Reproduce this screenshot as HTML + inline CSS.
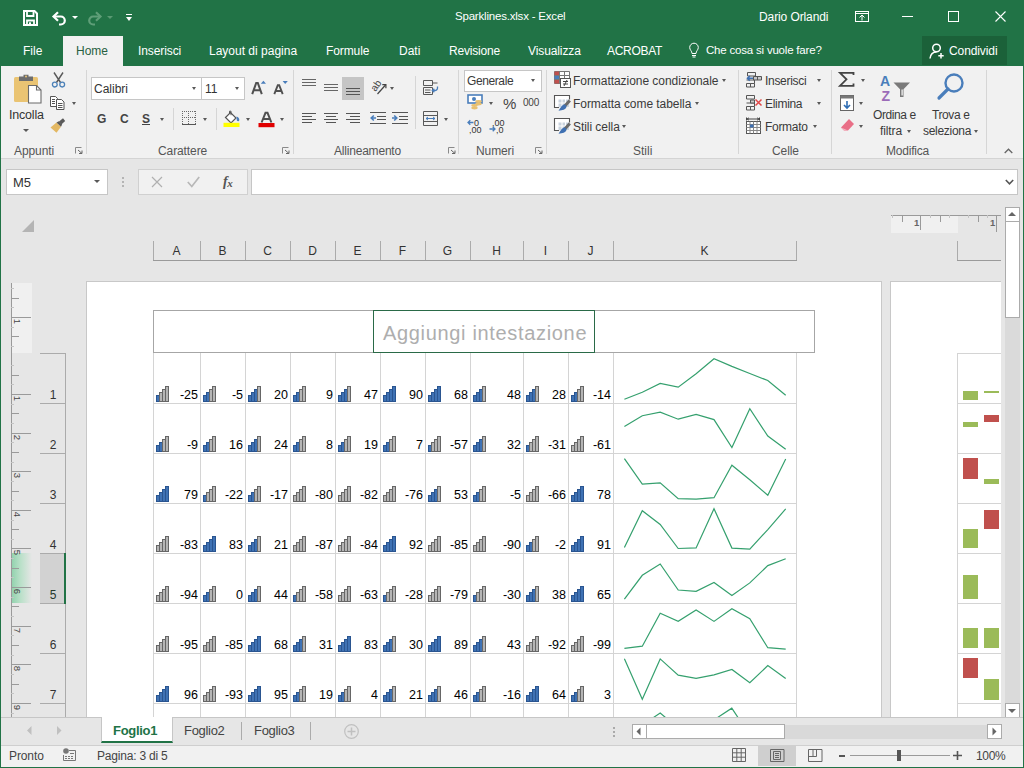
<!DOCTYPE html>
<html><head><meta charset="utf-8">
<style>
*{margin:0;padding:0;box-sizing:border-box}
html,body{width:1024px;height:768px;overflow:hidden;background:#e6e6e6;font-family:"Liberation Sans",sans-serif;}
.a{position:absolute}
.t{position:absolute;white-space:nowrap;line-height:1}
svg{position:absolute;overflow:visible}
#title{left:0;top:0;width:1024px;height:36px;background:#217346}
#tabs{left:0;top:36px;width:1024px;height:30px;background:#217346}
#ribbon{left:0;top:66px;width:1024px;height:93px;background:#f1f1f1;border-bottom:1px solid #d4d4d4}
.wt{color:#fff;font-size:12px}
.rt{color:#3a3a3a;font-size:12px}
.gl{color:#555;font-size:12px}
.sep{position:absolute;width:1px;background:#d6d6d6}
.num{font-size:12.5px;color:#000}
.arr{position:absolute;width:0;height:0;border-left:2.5px solid transparent;border-right:2.5px solid transparent;border-top:3px solid #595959}
</style></head><body>
<div class="a" id="title"></div>
<div class="a" id="tabs"></div>
<div class="a" id="ribbon"></div>

<!-- TITLE BAR -->
<svg style="left:23px;top:10px" width="15" height="16" viewBox="0 0 15 16"><path d="M1 1h10.5L14 3.5V15H1z" fill="none" stroke="#fff" stroke-width="2"/><path d="M4 1.5v4.5h6.5V1.5" fill="none" stroke="#fff" stroke-width="1.8"/><path d="M4 15v-4.5h7V15" fill="none" stroke="#fff" stroke-width="1.8"/><rect x="6" y="12.3" width="2" height="2.7" fill="#fff"/></svg>
<svg style="left:52px;top:11px" width="15" height="14" viewBox="0 0 15 14"><path d="M2 5.5h6.8a4 4 0 0 1 0 8H7" fill="none" stroke="#fff" stroke-width="2.2"/><path d="M6 1.2L1.5 5.5 6 9.8" fill="none" stroke="#fff" stroke-width="2.2"/></svg>
<div class="arr" style="left:72px;top:16px;border-top-color:#fff;border-left-width:3px;border-right-width:3px;border-top-width:3px"></div>
<svg style="left:87px;top:11px" width="15" height="14" viewBox="0 0 15 14"><path d="M13 5.5H6.2a4 4 0 0 0 0 8H8" fill="none" stroke="#5f9e78" stroke-width="2.2"/><path d="M9 1.2l4.5 4.3L9 9.8" fill="none" stroke="#5f9e78" stroke-width="2.2"/></svg>
<div class="arr" style="left:107px;top:16px;border-top-color:#5a9a73;border-left-width:3px;border-right-width:3px;border-top-width:3px"></div>
<div class="a" style="left:126px;top:14px;width:6px;height:1.3px;background:#fff"></div>
<div class="arr" style="left:125.5px;top:17px;border-top-color:#fff;border-left-width:3.5px;border-right-width:3.5px;border-top-width:4px"></div>
<div class="t wt" style="left:455px;top:11px;font-size:11.5px;letter-spacing:-0.2px">Sparklines.xlsx - Excel</div>
<div class="t wt" style="left:759px;top:11px;font-size:12px;letter-spacing:-0.1px">Dario Orlandi</div>
<svg style="left:855px;top:11px" width="14" height="11" viewBox="0 0 14 11"><rect x="0.5" y="0.5" width="13" height="10" fill="none" stroke="#fff" stroke-width="1"/><path d="M0.5 2.5h13" stroke="#fff" stroke-width="1"/><path d="M7 9.5V4.5M4.5 6.5L7 4l2.5 2.5" fill="none" stroke="#fff" stroke-width="1"/></svg>
<div class="a" style="left:902px;top:16px;width:11px;height:1px;background:#fff"></div>
<div class="a" style="left:948px;top:11px;width:11px;height:11px;border:1px solid #fff"></div>
<svg style="left:995px;top:11px" width="11" height="11" viewBox="0 0 11 11"><path d="M0.5 0.5l10 10M10.5 0.5l-10 10" stroke="#fff" stroke-width="1.1"/></svg>
<!-- TABS -->
<div class="t wt" style="left:23px;top:45px">File</div>
<div class="a" style="left:63px;top:36px;width:60px;height:31px;background:#f1f1f1"></div>
<div class="t" style="left:76px;top:45px;font-size:12px;color:#285f41">Home</div>
<div class="t wt" style="left:138px;top:45px;letter-spacing:-0.1px">Inserisci</div>
<div class="t wt" style="left:209px;top:45px">Layout di pagina</div>
<div class="t wt" style="left:326px;top:45px;letter-spacing:-0.1px">Formule</div>
<div class="t wt" style="left:399px;top:45px">Dati</div>
<div class="t wt" style="left:449px;top:45px;letter-spacing:-0.2px">Revisione</div>
<div class="t wt" style="left:528px;top:45px;letter-spacing:-0.1px">Visualizza</div>
<div class="t wt" style="left:607px;top:45px;letter-spacing:-0.3px">ACROBAT</div>
<svg style="left:689px;top:43px" width="10" height="15" viewBox="0 0 10 15"><path d="M3 10.5C3 8 0.7 7 0.7 4.5a4.3 4.3 0 0 1 8.6 0C9.3 7 7 8 7 10.5z" fill="none" stroke="#fff" stroke-width="1"/><path d="M3 12.5h4M3.5 14h3" stroke="#fff" stroke-width="1"/></svg>
<div class="t wt" style="left:706px;top:45px;font-size:11.5px;letter-spacing:-0.2px">Che cosa si vuole fare?</div>
<div class="a" style="left:922px;top:36px;width:85px;height:29px;background:#1b6139"></div>
<svg style="left:929px;top:43px" width="16" height="16" viewBox="0 0 16 16"><circle cx="7.5" cy="5" r="3.8" fill="none" stroke="#fff" stroke-width="1.5"/><path d="M1 15.5c0.5-4 3-6.5 6.5-6.5" fill="none" stroke="#fff" stroke-width="1.5"/><path d="M12 10v5.5M9.3 12.8h5.4" stroke="#fff" stroke-width="1.5"/></svg>
<div class="t wt" style="left:949px;top:45px;letter-spacing:-0.1px">Condividi</div>

<!-- RIBBON: Appunti -->
<svg style="left:14px;top:74px" width="30" height="30" viewBox="0 0 30 30"><rect x="0" y="3" width="24" height="25" rx="1.5" fill="#eac473"/><path d="M5 2.5h4.5V0.8h5v1.7H19V7H5z" fill="#6d6d6d"/><circle cx="12" cy="2.6" r="1" fill="#eac473"/><path d="M14.5 11.5h8l4.5 4.5v13H14.5z" fill="#fff" stroke="#6b6b6b" stroke-width="1.1"/><path d="M22.5 11.5v4.5H27" fill="none" stroke="#6b6b6b" stroke-width="1.1"/></svg>
<div class="t rt" style="left:9px;top:109px;font-size:12.5px;letter-spacing:-0.2px;color:#333">Incolla</div>
<div class="arr" style="left:23px;top:129px;border-left-width:3px;border-right-width:3px;border-top-width:3px"></div>
<svg style="left:51px;top:72px" width="15" height="16" viewBox="0 0 15 16"><path d="M3 0.5l6.5 10M12 0.5L5.5 10.5" stroke="#595959" stroke-width="1.4"/><circle cx="3.8" cy="12.6" r="2.4" fill="none" stroke="#4d82b8" stroke-width="1.3"/><circle cx="11.2" cy="12.6" r="2.4" fill="none" stroke="#4d82b8" stroke-width="1.3"/></svg>
<svg style="left:50px;top:96px" width="15" height="14" viewBox="0 0 15 14"><path d="M0.5 0.5h5l2 2v8h-7z" fill="#fff" stroke="#555" stroke-width="1"/><path d="M2 3.5h3M2 5.5h3M2 7.5h3" stroke="#555" stroke-width="1"/><path d="M6.5 3.5h5l2.5 2.5v7.5h-7.5z" fill="#fff" stroke="#555" stroke-width="1"/><path d="M8 7.5h4.5M8 9.5h4.5M8 11.5h4.5" stroke="#555" stroke-width="1"/></svg>
<div class="arr" style="left:72px;top:102px;border-left-width:2.5px;border-right-width:2.5px;border-top-width:3px"></div>
<svg style="left:50px;top:118px" width="16" height="15" viewBox="0 0 16 15"><path d="M9 3.5l4-3.2 2.2 2.6-3.8 3.5z" fill="#5a5a5a"/><path d="M6.5 4.5l4.5 4.2-4.5 6-6-5.2z" fill="#e3b863"/><path d="M6.5 4.5l2.3-1.3 3.3 3.3-1.1 2.2z" fill="#5a5a5a"/></svg>
<div class="t gl" style="left:14px;top:145px;font-size:12px;letter-spacing:-0.1px">Appunti</div>
<svg style="left:75px;top:147px" width="8" height="7" viewBox="0 0 8 7"><path d="M0.5 6.5v-6h6" fill="none" stroke="#8a8a8a" stroke-width="1"/><path d="M3 3l4 3.5M4 6.5h3v-3" fill="none" stroke="#666" stroke-width="1"/></svg>
<div class="sep" style="left:86px;top:70px;height:84px"></div>
<!-- Carattere -->
<div class="a" style="left:91px;top:77px;width:111px;height:23px;background:#fff;border:1px solid #c6c6c6"></div>
<div class="a" style="left:201px;top:77px;width:44px;height:23px;background:#fff;border:1px solid #c6c6c6"></div>
<div class="t rt" style="left:94px;top:83px;font-size:12px;color:#333">Calibri</div>
<div class="arr" style="left:192px;top:87px"></div>
<div class="t rt" style="left:205px;top:83px;font-size:12px;color:#333">11</div>
<div class="arr" style="left:235px;top:87px"></div>
<svg style="left:251px;top:80px" width="15" height="15" viewBox="0 0 15 15"><path d="M1.2 14.2L5.2 3h1.6L10.8 14.2M3 10.2h6" fill="none" stroke="#505050" stroke-width="2"/><path d="M9.8 3.8l2.6-3 2.6 3z" fill="#4a7ebb"/></svg>
<svg style="left:273px;top:80px" width="15" height="15" viewBox="0 0 15 15"><path d="M1.3 14.2L4.8 5.2h1.4L9.7 14.2M2.8 11h5.4" fill="none" stroke="#505050" stroke-width="1.9"/><path d="M9.6 1h5.2l-2.6 3z" fill="#4a7ebb"/></svg>
<div class="t" style="left:97px;top:113px;font-size:12px;font-weight:bold;color:#444">G</div>
<div class="t" style="left:120px;top:113px;font-size:12px;font-weight:bold;color:#444">C</div>
<div class="t" style="left:142px;top:113px;font-size:12px;font-weight:bold;color:#444">S</div>
<div class="a" style="left:142px;top:124px;width:8px;height:1px;background:#444"></div>
<div class="arr" style="left:160px;top:118px"></div>
<div class="sep" style="left:173px;top:108px;height:22px"></div>
<svg style="left:182px;top:111px" width="14" height="14" viewBox="0 0 14 14" shape-rendering="crispEdges"><g fill="#6a6a6a"><rect x="0" y="0" width="1" height="1"/><rect x="0" y="6" width="1" height="1"/><rect x="0" y="0" width="1" height="1"/><rect x="6" y="0" width="1" height="1"/><rect x="13" y="0" width="1" height="1"/><rect x="2" y="0" width="1" height="1"/><rect x="2" y="6" width="1" height="1"/><rect x="0" y="2" width="1" height="1"/><rect x="6" y="2" width="1" height="1"/><rect x="13" y="2" width="1" height="1"/><rect x="4" y="0" width="1" height="1"/><rect x="4" y="6" width="1" height="1"/><rect x="0" y="4" width="1" height="1"/><rect x="6" y="4" width="1" height="1"/><rect x="13" y="4" width="1" height="1"/><rect x="6" y="0" width="1" height="1"/><rect x="6" y="6" width="1" height="1"/><rect x="0" y="6" width="1" height="1"/><rect x="6" y="6" width="1" height="1"/><rect x="13" y="6" width="1" height="1"/><rect x="8" y="0" width="1" height="1"/><rect x="8" y="6" width="1" height="1"/><rect x="0" y="8" width="1" height="1"/><rect x="6" y="8" width="1" height="1"/><rect x="13" y="8" width="1" height="1"/><rect x="10" y="0" width="1" height="1"/><rect x="10" y="6" width="1" height="1"/><rect x="0" y="10" width="1" height="1"/><rect x="6" y="10" width="1" height="1"/><rect x="13" y="10" width="1" height="1"/><rect x="12" y="0" width="1" height="1"/><rect x="12" y="6" width="1" height="1"/><rect x="0" y="12" width="1" height="1"/><rect x="6" y="12" width="1" height="1"/><rect x="13" y="12" width="1" height="1"/></g><rect x="0" y="13" width="14" height="1.2" fill="#555"/></svg>
<div class="arr" style="left:203px;top:118px"></div>
<div class="sep" style="left:216px;top:108px;height:22px"></div>
<svg style="left:223px;top:110px" width="18" height="18" viewBox="0 0 18 18"><path d="M2.5 7.5l5-5 5.5 5.5-5 5z" fill="#fff" stroke="#555" stroke-width="1.2"/><path d="M6.5 3.5V1.2h1.5v4" fill="none" stroke="#555" stroke-width="1"/><path d="M13.5 6.5c1.8 0.5 2.8 1.8 2.8 3.2 0 1-0.6 1.6-1.3 1.6-0.8 0-1.4-0.8-1.3-2z" fill="#4a7ebb"/><rect x="0.5" y="12.8" width="16" height="4.2" fill="#ffff00"/></svg>
<div class="arr" style="left:246px;top:118px"></div>
<svg style="left:258px;top:111px" width="17" height="17" viewBox="0 0 17 17"><path d="M3.6 11.5L7.5 1.8h2L13.4 11.5M5.4 8h6.2" fill="none" stroke="#505050" stroke-width="2"/><rect x="0.5" y="12" width="16" height="4.2" fill="#e00000"/></svg>
<div class="arr" style="left:280px;top:118px"></div>
<div class="t gl" style="left:158px;top:145px;letter-spacing:-0.1px">Carattere</div>
<svg style="left:282px;top:147px" width="8" height="7" viewBox="0 0 8 7"><path d="M0.5 6.5v-6h6" fill="none" stroke="#8a8a8a" stroke-width="1"/><path d="M3 3l4 3.5M4 6.5h3v-3" fill="none" stroke="#666" stroke-width="1"/></svg>
<div class="sep" style="left:293px;top:70px;height:84px"></div>

<!-- Allineamento -->
<svg style="left:302px;top:79px" width="15" height="8" viewBox="0 0 15 8"><path d="M0 0.5h14M0 3.5h14M0 6.5h14" stroke="#666" stroke-width="1"/></svg>
<svg style="left:324px;top:84px" width="15" height="8" viewBox="0 0 15 8"><path d="M0 0.5h14M0 3.5h14M0 6.5h14" stroke="#666" stroke-width="1"/></svg>
<div class="a" style="left:342px;top:77px;width:22px;height:23px;background:#c5c5c5"></div>
<svg style="left:346px;top:88px" width="15" height="8" viewBox="0 0 15 8"><path d="M0 0.5h14M0 3.5h14M0 6.5h14" stroke="#555" stroke-width="1"/></svg>
<svg style="left:370px;top:79px" width="17" height="16" viewBox="0 0 17 16"><text x="0" y="0" font-family="Liberation Sans" font-size="10" fill="#444" transform="translate(5.5 13) rotate(-55)">ab</text><path d="M7.5 15L15.5 6" stroke="#444" stroke-width="1.2"/><path d="M12.3 5.6h3.6v3.6" fill="none" stroke="#444" stroke-width="1.2"/></svg>
<div class="arr" style="left:390px;top:87px"></div>
<div class="sep" style="left:415px;top:76px;height:53px"></div>
<svg style="left:423px;top:80px" width="17" height="16" viewBox="0 0 17 16"><path d="M0.5 0.5h9v5h-9zM0.5 7.5h9v7h-9z" fill="none" stroke="#595959" stroke-width="1"/><path d="M9.5 3h5M2 10h5.5M2 12.5h5.5" stroke="#595959" stroke-width="1"/><path d="M14.5 6.5v1.5a2.5 2.5 0 0 1-2.5 2.5H9.5M11.3 8.7L9.3 10.5l2 1.8" fill="none" stroke="#4a7ebb" stroke-width="1.3"/></svg>
<svg style="left:302px;top:113px" width="15" height="11" viewBox="0 0 15 11"><path d="M0 0.5h14M0 3.5h10M0 6.5h14M0 9.5h10" stroke="#555" stroke-width="1"/></svg>
<svg style="left:324px;top:113px" width="15" height="11" viewBox="0 0 15 11"><path d="M0 0.5h14M2 3.5h10M0 6.5h14M2 9.5h10" stroke="#555" stroke-width="1"/></svg>
<svg style="left:346px;top:113px" width="15" height="11" viewBox="0 0 15 11"><path d="M0 0.5h14M4 3.5h10M0 6.5h14M4 9.5h10" stroke="#555" stroke-width="1"/></svg>
<svg style="left:370px;top:112px" width="17" height="13" viewBox="0 0 17 13"><path d="M0 0.5h16M7 4.5h9M7 7.5h9M0 11.5h16" stroke="#555" stroke-width="1"/><path d="M6 6H1.2M3.8 3.5L1.2 6l2.6 2.5" fill="none" stroke="#4a7ebb" stroke-width="1.6"/></svg>
<svg style="left:392px;top:112px" width="17" height="13" viewBox="0 0 17 13"><path d="M0 0.5h16M7 4.5h9M7 7.5h9M0 11.5h16" stroke="#555" stroke-width="1"/><path d="M0 6h4.8M2.2 3.5L4.8 6 2.2 8.5" fill="none" stroke="#4a7ebb" stroke-width="1.6"/></svg>
<svg style="left:423px;top:111px" width="16" height="16" viewBox="0 0 16 16"><path d="M0.5 0.5h14v14h-14zM0.5 4.5h14M0.5 10.5h14" fill="none" stroke="#595959" stroke-width="1"/><path d="M3 7.5h9M5 6l-2 1.5L5 9M10 6l2 1.5L10 9" fill="none" stroke="#4a7ebb" stroke-width="1"/></svg>
<div class="arr" style="left:444px;top:118px"></div>
<div class="t gl" style="left:334px;top:145px;letter-spacing:-0.2px">Allineamento</div>
<svg style="left:448px;top:147px" width="8" height="7" viewBox="0 0 8 7"><path d="M0.5 6.5v-6h6" fill="none" stroke="#8a8a8a" stroke-width="1"/><path d="M3 3l4 3.5M4 6.5h3v-3" fill="none" stroke="#666" stroke-width="1"/></svg>
<div class="sep" style="left:458px;top:70px;height:84px"></div>
<!-- Numeri -->
<div class="a" style="left:464px;top:70px;width:78px;height:22px;background:#fff;border:1px solid #c6c6c6"></div>
<div class="t rt" style="left:467px;top:75px;font-size:12px;color:#3a3a3a;letter-spacing:-0.4px">Generale</div>
<div class="arr" style="left:531px;top:79px"></div>
<svg style="left:467px;top:94px" width="17" height="17" viewBox="0 0 17 17"><rect x="1" y="1" width="14" height="8" fill="#fff" stroke="#4a7ebb" stroke-width="1.6"/><circle cx="7" cy="5" r="2" fill="#4a7ebb"/><ellipse cx="11.5" cy="7.5" rx="3.2" ry="1.4" fill="#e8c070"/><ellipse cx="11.5" cy="10" rx="3.2" ry="1.4" fill="#e8c070"/><ellipse cx="7.5" cy="11.5" rx="3.2" ry="1.4" fill="#e8c070"/><ellipse cx="7.5" cy="14" rx="3.2" ry="1.4" fill="#e8c070"/></svg>
<div class="arr" style="left:489px;top:102px"></div>
<div class="t" style="left:503px;top:96px;font-size:15px;color:#444">%</div>
<div class="t" style="left:523px;top:98px;font-size:10px;color:#444;letter-spacing:-0.2px">000</div>
<svg style="left:467px;top:118px" width="17" height="15" viewBox="0 0 17 15"><text x="7" y="7.5" font-family="Liberation Sans" font-size="9" fill="#333">0</text><text x="2" y="14.5" font-family="Liberation Sans" font-size="9" fill="#333">,00</text><path d="M6.5 4.5H1M3.3 2.2L1 4.5l2.3 2.3" fill="none" stroke="#4a7ebb" stroke-width="1.3"/></svg>
<svg style="left:489px;top:118px" width="17" height="15" viewBox="0 0 17 15"><text x="3" y="7.5" font-family="Liberation Sans" font-size="9" fill="#333">,00</text><text x="7" y="14.5" font-family="Liberation Sans" font-size="9" fill="#333">,0</text><path d="M0.5 11h5.5M3.7 8.7L6 11l-2.3 2.3" fill="none" stroke="#4a7ebb" stroke-width="1.3"/></svg>
<div class="t gl" style="left:476px;top:145px;letter-spacing:-0.1px">Numeri</div>
<svg style="left:535px;top:147px" width="8" height="7" viewBox="0 0 8 7"><path d="M0.5 6.5v-6h6" fill="none" stroke="#8a8a8a" stroke-width="1"/><path d="M3 3l4 3.5M4 6.5h3v-3" fill="none" stroke="#666" stroke-width="1"/></svg>
<div class="sep" style="left:546px;top:70px;height:84px"></div>
<!-- Stili -->
<svg style="left:554px;top:71px" width="17" height="17" viewBox="0 0 17 17"><path d="M0.5 0.5h15v12h-15z" fill="#fff" stroke="#777" stroke-width="1"/><rect x="0.5" y="0.5" width="5" height="4" fill="#c0504d"/><rect x="0.5" y="4.5" width="5" height="4" fill="#4a7ebb"/><rect x="0.5" y="8.5" width="5" height="4" fill="#c0504d"/><path d="M5.5 0.5v12M0.5 4.5h15M0.5 8.5h15M10.5 0.5v12" stroke="#777" stroke-width="1"/><rect x="6.5" y="7.5" width="10" height="9" fill="#fff" stroke="#555" stroke-width="1"/><path d="M9 10.5h5M9 13h5M13 9l-3 6" stroke="#444" stroke-width="1"/></svg>
<div class="t rt" style="left:573px;top:75px;letter-spacing:-0.05px">Formattazione condizionale</div>
<div class="arr" style="left:722px;top:79px"></div>
<svg style="left:554px;top:95px" width="17" height="17" viewBox="0 0 17 17"><rect x="1" y="1" width="14" height="11" fill="#fff"/><rect x="4" y="4" width="11" height="8" fill="#c9d3de"/><path d="M4 1v11M8 1v11M11.5 1v11M1 4h14M1 8h14" stroke="#fff" stroke-width="1"/><path d="M5 12.5H0.5V0.5h15v4" fill="none" stroke="#555" stroke-width="1.1"/><path d="M15.8 5.5L11 10.8" stroke="#6a6a6a" stroke-width="3"/><path d="M10.5 9.5c1.5 0.3 2.3 1.5 1.8 3-0.8 1.8-3.5 3-7.8 3.2 1.2-1.3 2-3.2 3.2-4.6 0.8-0.9 1.8-1.6 2.8-1.6z" fill="#3f70b2"/></svg>
<div class="t rt" style="left:573px;top:98px;letter-spacing:-0.05px">Formatta come tabella</div>
<div class="arr" style="left:695px;top:102px"></div>
<svg style="left:554px;top:118px" width="17" height="17" viewBox="0 0 17 17"><rect x="1" y="1" width="14" height="11" fill="#fff"/><rect x="4" y="4" width="11" height="8" fill="#c9d3de"/><path d="M4 1v11M8 1v11M11.5 1v11M1 4h14M1 8h14" stroke="#fff" stroke-width="1"/><path d="M5 12.5H0.5V0.5h15v4" fill="none" stroke="#555" stroke-width="1.1"/><path d="M15.8 5.5L11 10.8" stroke="#6a6a6a" stroke-width="3"/><path d="M10.5 9.5c1.5 0.3 2.3 1.5 1.8 3-0.8 1.8-3.5 3-7.8 3.2 1.2-1.3 2-3.2 3.2-4.6 0.8-0.9 1.8-1.6 2.8-1.6z" fill="#3f70b2"/></svg>
<div class="t rt" style="left:573px;top:121px;letter-spacing:-0.05px">Stili cella</div>
<div class="arr" style="left:622px;top:125px"></div>
<div class="t gl" style="left:633px;top:145px">Stili</div>
<div class="sep" style="left:738px;top:70px;height:84px"></div>
<!-- Celle -->
<svg style="left:746px;top:72px" width="17" height="16" viewBox="0 0 17 16"><g fill="none" stroke="#555" stroke-width="1"><path d="M1.5 0.5h8v3.5h-8zM0.5 11.5h4v3.5h-4zM4.5 11.5h4v3.5h-4zM0.5 8h8v3.5"/><path d="M7.5 4.5h8v3.5h-8z" fill="#c8c8c8"/><path d="M11.5 4.5v3.5"/></g><path d="M7 6.3H1.5M3.8 4L1.5 6.3l2.3 2.3" fill="none" stroke="#3f70b2" stroke-width="1.6"/></svg>
<div class="t rt" style="left:765px;top:75px;letter-spacing:-0.3px">Inserisci</div>
<div class="arr" style="left:817px;top:79px"></div>
<svg style="left:746px;top:95px" width="17" height="16" viewBox="0 0 17 16"><g fill="none" stroke="#555" stroke-width="1"><path d="M0.5 0.5h8v3.5h-8zM0.5 11.5h4v3.5h-4zM4.5 11.5h4v3.5h-4zM0.5 8h8v3.5"/><path d="M4.5 5h4v3h-4z" fill="#c8c8c8"/></g><path d="M9.5 4.5l6 6M15.5 4.5l-6 6" stroke="#e04848" stroke-width="1.5"/></svg>
<div class="t rt" style="left:765px;top:98px;letter-spacing:-0.3px">Elimina</div>
<div class="arr" style="left:817px;top:102px"></div>
<svg style="left:746px;top:117px" width="17" height="17" viewBox="0 0 17 17"><path d="M0.5 0.5v3M13.5 0.5v3M1 2h12" fill="none" stroke="#444" stroke-width="1"/><path d="M3 0.8L1 2l2 1.2M11 0.8L13 2l-2 1.2" fill="none" stroke="#444" stroke-width="0.9"/><rect x="0.5" y="4.5" width="14" height="12" fill="#fff" stroke="#555" stroke-width="1"/><path d="M0.5 7.5h14M0.5 10.5h14M0.5 13.5h14M4 4.5v12M7.5 4.5v12M11 4.5v12" stroke="#888" stroke-width="1"/><rect x="4" y="7.5" width="3.5" height="3" fill="#3f70b2"/></svg>
<div class="t rt" style="left:765px;top:121px;letter-spacing:-0.3px">Formato</div>
<div class="arr" style="left:813px;top:125px"></div>
<div class="t gl" style="left:772px;top:145px;letter-spacing:-0.1px">Celle</div>
<div class="sep" style="left:831px;top:70px;height:84px"></div>
<!-- Modifica -->
<svg style="left:839px;top:72px" width="16" height="15" viewBox="0 0 16 15"><path d="M14.5 3V0.8H1L7.5 7.3 1 13.8h13.5v-2.3" fill="none" stroke="#444" stroke-width="1.8"/></svg>
<div class="arr" style="left:861px;top:79px"></div>
<svg style="left:840px;top:95px" width="15" height="16" viewBox="0 0 15 16"><rect x="0.5" y="0.5" width="13" height="15" fill="#fff" stroke="#666" stroke-width="1"/><rect x="0.5" y="0.5" width="13" height="3" fill="#777"/><path d="M7 6v7M4 10l3 3 3-3" fill="none" stroke="#2e6db4" stroke-width="1.6"/></svg>
<div class="arr" style="left:859px;top:102px"></div>
<svg style="left:840px;top:118px" width="15" height="14" viewBox="0 0 15 14"><path d="M9 1l5 5-6 6.5H4L1 9.5z" fill="#e96f87"/><path d="M1 9.5l3 3h4" fill="#f4b6c2"/></svg>
<div class="arr" style="left:859px;top:125px"></div>
<svg style="left:880px;top:74px" width="32" height="28" viewBox="0 0 32 28"><text x="0" y="12" font-family="Liberation Sans" font-size="14" font-weight="bold" fill="#4a7ebb">A</text><text x="1.5" y="26.5" font-family="Liberation Sans" font-size="14" font-weight="bold" fill="#9b6bb8">Z</text><path d="M13.5 8.5h16.5l-6.5 6.8v7.7h-3.5v-7.7z" fill="#7a7a7a"/><path d="M21.5 15.5v6h1.2v-6z" fill="#fff"/></svg>
<div class="t rt" style="left:873px;top:109px;letter-spacing:-0.4px">Ordina e</div>
<div class="t rt" style="left:880px;top:125px;letter-spacing:-0.1px">filtra</div>
<div class="arr" style="left:907px;top:130px"></div>
<svg style="left:937px;top:73px" width="28" height="28" viewBox="0 0 28 28"><circle cx="17" cy="10" r="8.5" fill="none" stroke="#4a7ebb" stroke-width="2.4"/><path d="M11 16L2 25" stroke="#4a7ebb" stroke-width="3.2" stroke-linecap="round"/></svg>
<div class="t rt" style="left:932px;top:109px;letter-spacing:-0.4px">Trova e</div>
<div class="t rt" style="left:923px;top:125px;letter-spacing:-0.3px">seleziona</div>
<div class="arr" style="left:974px;top:130px"></div>
<div class="t gl" style="left:886px;top:145px;letter-spacing:-0.2px">Modifica</div>
<div class="sep" style="left:986px;top:70px;height:84px"></div>
<svg style="left:1004px;top:148px" width="9" height="6" viewBox="0 0 9 6"><path d="M0.7 5L4.5 1.2 8.3 5" fill="none" stroke="#666" stroke-width="1.3"/></svg>
<!-- MAIN START -->
<!-- FORMULA BAR -->
<div class="a" style="left:6px;top:169px;width:102px;height:26px;background:#fff;border:1px solid #c6c6c6"></div>
<div class="t" style="left:13px;top:176px;font-size:13px;color:#333;letter-spacing:-0.2px">M5</div>
<div class="arr" style="left:94px;top:180px;border-left-width:3px;border-right-width:3px;border-top-width:3.5px"></div>
<div class="a" style="left:122px;top:177px;width:2px;height:2px;background:#b4b4b4"></div>
<div class="a" style="left:122px;top:181px;width:2px;height:2px;background:#b4b4b4"></div>
<div class="a" style="left:122px;top:185px;width:2px;height:2px;background:#b4b4b4"></div>
<div class="a" style="left:138px;top:169px;width:110px;height:26px;background:#f1f1f1;border:1px solid #d0d0d0"></div>
<svg style="left:151px;top:176px" width="12" height="12" viewBox="0 0 12 12"><path d="M1 1l10 10M11 1L1 11" stroke="#b0b0b0" stroke-width="1.2"/></svg>
<svg style="left:187px;top:176px" width="13" height="12" viewBox="0 0 13 12"><path d="M0.8 6l4 4.5L12.2 1" fill="none" stroke="#b8b8b8" stroke-width="1.7"/></svg>
<div class="t" style="left:223px;top:175px;font-size:14px;font-family:'Liberation Serif',serif;font-style:italic;font-weight:bold;color:#555;letter-spacing:-0.5px">f<span style="font-size:11px;position:relative;top:1px">x</span></div>
<div class="a" style="left:251px;top:169px;width:767px;height:26px;background:#fff;border:1px solid #c6c6c6"></div>
<svg style="left:1005px;top:179px" width="9" height="6" viewBox="0 0 9 6"><path d="M0.8 1L4.5 4.8 8.2 1" fill="none" stroke="#555" stroke-width="1.6"/></svg>
<!-- select all triangle -->
<svg style="left:22px;top:220px" width="12" height="12" viewBox="0 0 12 12"><path d="M12 0V12H0z" fill="#b4b4b4"/></svg>

<div class="a" style="left:86px;top:281px;width:796px;height:436px;background:#fff;border:1px solid #c8c8c8;border-bottom:none"></div>
<div class="a" style="left:890px;top:281px;width:112px;height:436px;background:#fff;border:1px solid #c8c8c8;border-bottom:none;border-right:none"></div>
<div class="a" style="left:153px;top:260px;width:644px;height:1px;background:#9a9a9a"></div>
<div class="a" style="left:153px;top:241px;width:1px;height:19px;background:#ababab"></div>
<div class="a" style="left:200px;top:241px;width:1px;height:19px;background:#ababab"></div>
<div class="a" style="left:245px;top:241px;width:1px;height:19px;background:#ababab"></div>
<div class="a" style="left:290px;top:241px;width:1px;height:19px;background:#ababab"></div>
<div class="a" style="left:335px;top:241px;width:1px;height:19px;background:#ababab"></div>
<div class="a" style="left:380px;top:241px;width:1px;height:19px;background:#ababab"></div>
<div class="a" style="left:425px;top:241px;width:1px;height:19px;background:#ababab"></div>
<div class="a" style="left:470px;top:241px;width:1px;height:19px;background:#ababab"></div>
<div class="a" style="left:523px;top:241px;width:1px;height:19px;background:#ababab"></div>
<div class="a" style="left:568px;top:241px;width:1px;height:19px;background:#ababab"></div>
<div class="a" style="left:613px;top:241px;width:1px;height:19px;background:#ababab"></div>
<div class="a" style="left:796px;top:241px;width:1px;height:19px;background:#ababab"></div>
<div class="t" style="left:166.5px;top:245px;width:20px;text-align:center;font-size:12px;color:#333">A</div>
<div class="t" style="left:212.5px;top:245px;width:20px;text-align:center;font-size:12px;color:#333">B</div>
<div class="t" style="left:257.5px;top:245px;width:20px;text-align:center;font-size:12px;color:#333">C</div>
<div class="t" style="left:302.5px;top:245px;width:20px;text-align:center;font-size:12px;color:#333">D</div>
<div class="t" style="left:347.5px;top:245px;width:20px;text-align:center;font-size:12px;color:#333">E</div>
<div class="t" style="left:392.5px;top:245px;width:20px;text-align:center;font-size:12px;color:#333">F</div>
<div class="t" style="left:437.5px;top:245px;width:20px;text-align:center;font-size:12px;color:#333">G</div>
<div class="t" style="left:486.5px;top:245px;width:20px;text-align:center;font-size:12px;color:#333">H</div>
<div class="t" style="left:535.5px;top:245px;width:20px;text-align:center;font-size:12px;color:#333">I</div>
<div class="t" style="left:580.5px;top:245px;width:20px;text-align:center;font-size:12px;color:#333">J</div>
<div class="t" style="left:694.5px;top:245px;width:20px;text-align:center;font-size:12px;color:#333">K</div>
<div class="a" style="left:957px;top:241px;width:1px;height:19px;background:#ababab"></div>
<div class="a" style="left:957px;top:260px;width:44px;height:1px;background:#9a9a9a"></div>
<div class="a" style="left:65px;top:353px;width:1px;height:364px;background:#ababab"></div>
<div class="a" style="left:40px;top:353px;width:26px;height:1px;background:#ababab"></div>
<div class="a" style="left:40px;top:403px;width:26px;height:1px;background:#ababab"></div>
<div class="a" style="left:40px;top:453px;width:26px;height:1px;background:#ababab"></div>
<div class="a" style="left:40px;top:503px;width:26px;height:1px;background:#ababab"></div>
<div class="a" style="left:40px;top:553px;width:26px;height:1px;background:#ababab"></div>
<div class="a" style="left:40px;top:603px;width:26px;height:1px;background:#ababab"></div>
<div class="a" style="left:40px;top:653px;width:26px;height:1px;background:#ababab"></div>
<div class="a" style="left:40px;top:703px;width:26px;height:1px;background:#ababab"></div>
<div class="t" style="left:44px;top:389px;width:18px;text-align:center;font-size:12px;color:#333">1</div>
<div class="t" style="left:44px;top:439px;width:18px;text-align:center;font-size:12px;color:#333">2</div>
<div class="t" style="left:44px;top:489px;width:18px;text-align:center;font-size:12px;color:#333">3</div>
<div class="t" style="left:44px;top:539px;width:18px;text-align:center;font-size:12px;color:#333">4</div>
<div class="t" style="left:44px;top:589px;width:18px;text-align:center;font-size:12px;color:#333">5</div>
<div class="t" style="left:44px;top:639px;width:18px;text-align:center;font-size:12px;color:#333">6</div>
<div class="t" style="left:44px;top:689px;width:18px;text-align:center;font-size:12px;color:#333">7</div>
<div class="a" style="left:153px;top:310px;width:662px;height:43px;border:1px solid #a6a6a6;border-bottom-color:#a6a6a6"></div>
<div class="a" style="left:373px;top:310px;width:222px;height:43px;border:1px solid #2a6a47;background:#fff"></div>
<div class="t" style="left:383px;top:323px;font-size:20px;color:#aeaeae;letter-spacing:0.67px">Aggiungi intestazione</div>
<div class="a" style="left:153px;top:353px;width:1px;height:364px;background:#d4d4d4"></div>
<div class="a" style="left:200px;top:353px;width:1px;height:364px;background:#d4d4d4"></div>
<div class="a" style="left:245px;top:353px;width:1px;height:364px;background:#d4d4d4"></div>
<div class="a" style="left:290px;top:353px;width:1px;height:364px;background:#d4d4d4"></div>
<div class="a" style="left:335px;top:353px;width:1px;height:364px;background:#d4d4d4"></div>
<div class="a" style="left:380px;top:353px;width:1px;height:364px;background:#d4d4d4"></div>
<div class="a" style="left:425px;top:353px;width:1px;height:364px;background:#d4d4d4"></div>
<div class="a" style="left:470px;top:353px;width:1px;height:364px;background:#d4d4d4"></div>
<div class="a" style="left:523px;top:353px;width:1px;height:364px;background:#d4d4d4"></div>
<div class="a" style="left:568px;top:353px;width:1px;height:364px;background:#d4d4d4"></div>
<div class="a" style="left:613px;top:353px;width:1px;height:364px;background:#d4d4d4"></div>
<div class="a" style="left:796px;top:353px;width:1px;height:364px;background:#d4d4d4"></div>
<div class="a" style="left:153px;top:403px;width:644px;height:1px;background:#d4d4d4"></div>
<div class="a" style="left:153px;top:453px;width:644px;height:1px;background:#d4d4d4"></div>
<div class="a" style="left:153px;top:503px;width:644px;height:1px;background:#d4d4d4"></div>
<div class="a" style="left:153px;top:553px;width:644px;height:1px;background:#d4d4d4"></div>
<div class="a" style="left:153px;top:603px;width:644px;height:1px;background:#d4d4d4"></div>
<div class="a" style="left:153px;top:653px;width:644px;height:1px;background:#d4d4d4"></div>
<div class="a" style="left:153px;top:703px;width:644px;height:1px;background:#d4d4d4"></div>
<svg style="left:156px;top:386px" width="13" height="16" viewBox="0 0 13 16"><rect x="0.5" y="9.5" width="3" height="6" fill="#3f72b4" stroke="#2a5590" stroke-width="1"/><rect x="3.5" y="6.5" width="3" height="9" fill="#b5b5b5" stroke="#666666" stroke-width="1"/><rect x="6.5" y="3.5" width="3" height="12" fill="#b5b5b5" stroke="#666666" stroke-width="1"/><rect x="9.5" y="0.5" width="3" height="15" fill="#b5b5b5" stroke="#666666" stroke-width="1"/></svg>
<div class="t num" style="right:826px;top:389px">-25</div>
<svg style="left:203px;top:386px" width="13" height="16" viewBox="0 0 13 16"><rect x="0.5" y="9.5" width="3" height="6" fill="#3f72b4" stroke="#2a5590" stroke-width="1"/><rect x="3.5" y="6.5" width="3" height="9" fill="#3f72b4" stroke="#2a5590" stroke-width="1"/><rect x="6.5" y="3.5" width="3" height="12" fill="#b5b5b5" stroke="#666666" stroke-width="1"/><rect x="9.5" y="0.5" width="3" height="15" fill="#b5b5b5" stroke="#666666" stroke-width="1"/></svg>
<div class="t num" style="right:781px;top:389px">-5</div>
<svg style="left:248px;top:386px" width="13" height="16" viewBox="0 0 13 16"><rect x="0.5" y="9.5" width="3" height="6" fill="#3f72b4" stroke="#2a5590" stroke-width="1"/><rect x="3.5" y="6.5" width="3" height="9" fill="#3f72b4" stroke="#2a5590" stroke-width="1"/><rect x="6.5" y="3.5" width="3" height="12" fill="#3f72b4" stroke="#2a5590" stroke-width="1"/><rect x="9.5" y="0.5" width="3" height="15" fill="#b5b5b5" stroke="#666666" stroke-width="1"/></svg>
<div class="t num" style="right:736px;top:389px">20</div>
<svg style="left:293px;top:386px" width="13" height="16" viewBox="0 0 13 16"><rect x="0.5" y="9.5" width="3" height="6" fill="#3f72b4" stroke="#2a5590" stroke-width="1"/><rect x="3.5" y="6.5" width="3" height="9" fill="#3f72b4" stroke="#2a5590" stroke-width="1"/><rect x="6.5" y="3.5" width="3" height="12" fill="#b5b5b5" stroke="#666666" stroke-width="1"/><rect x="9.5" y="0.5" width="3" height="15" fill="#b5b5b5" stroke="#666666" stroke-width="1"/></svg>
<div class="t num" style="right:691px;top:389px">9</div>
<svg style="left:338px;top:386px" width="13" height="16" viewBox="0 0 13 16"><rect x="0.5" y="9.5" width="3" height="6" fill="#3f72b4" stroke="#2a5590" stroke-width="1"/><rect x="3.5" y="6.5" width="3" height="9" fill="#3f72b4" stroke="#2a5590" stroke-width="1"/><rect x="6.5" y="3.5" width="3" height="12" fill="#3f72b4" stroke="#2a5590" stroke-width="1"/><rect x="9.5" y="0.5" width="3" height="15" fill="#b5b5b5" stroke="#666666" stroke-width="1"/></svg>
<div class="t num" style="right:646px;top:389px">47</div>
<svg style="left:383px;top:386px" width="13" height="16" viewBox="0 0 13 16"><rect x="0.5" y="9.5" width="3" height="6" fill="#3f72b4" stroke="#2a5590" stroke-width="1"/><rect x="3.5" y="6.5" width="3" height="9" fill="#3f72b4" stroke="#2a5590" stroke-width="1"/><rect x="6.5" y="3.5" width="3" height="12" fill="#3f72b4" stroke="#2a5590" stroke-width="1"/><rect x="9.5" y="0.5" width="3" height="15" fill="#3f72b4" stroke="#2a5590" stroke-width="1"/></svg>
<div class="t num" style="right:601px;top:389px">90</div>
<svg style="left:428px;top:386px" width="13" height="16" viewBox="0 0 13 16"><rect x="0.5" y="9.5" width="3" height="6" fill="#3f72b4" stroke="#2a5590" stroke-width="1"/><rect x="3.5" y="6.5" width="3" height="9" fill="#3f72b4" stroke="#2a5590" stroke-width="1"/><rect x="6.5" y="3.5" width="3" height="12" fill="#3f72b4" stroke="#2a5590" stroke-width="1"/><rect x="9.5" y="0.5" width="3" height="15" fill="#3f72b4" stroke="#2a5590" stroke-width="1"/></svg>
<div class="t num" style="right:556px;top:389px">68</div>
<svg style="left:473px;top:386px" width="13" height="16" viewBox="0 0 13 16"><rect x="0.5" y="9.5" width="3" height="6" fill="#3f72b4" stroke="#2a5590" stroke-width="1"/><rect x="3.5" y="6.5" width="3" height="9" fill="#3f72b4" stroke="#2a5590" stroke-width="1"/><rect x="6.5" y="3.5" width="3" height="12" fill="#3f72b4" stroke="#2a5590" stroke-width="1"/><rect x="9.5" y="0.5" width="3" height="15" fill="#b5b5b5" stroke="#666666" stroke-width="1"/></svg>
<div class="t num" style="right:503px;top:389px">48</div>
<svg style="left:526px;top:386px" width="13" height="16" viewBox="0 0 13 16"><rect x="0.5" y="9.5" width="3" height="6" fill="#3f72b4" stroke="#2a5590" stroke-width="1"/><rect x="3.5" y="6.5" width="3" height="9" fill="#3f72b4" stroke="#2a5590" stroke-width="1"/><rect x="6.5" y="3.5" width="3" height="12" fill="#3f72b4" stroke="#2a5590" stroke-width="1"/><rect x="9.5" y="0.5" width="3" height="15" fill="#b5b5b5" stroke="#666666" stroke-width="1"/></svg>
<div class="t num" style="right:458px;top:389px">28</div>
<svg style="left:571px;top:386px" width="13" height="16" viewBox="0 0 13 16"><rect x="0.5" y="9.5" width="3" height="6" fill="#3f72b4" stroke="#2a5590" stroke-width="1"/><rect x="3.5" y="6.5" width="3" height="9" fill="#3f72b4" stroke="#2a5590" stroke-width="1"/><rect x="6.5" y="3.5" width="3" height="12" fill="#b5b5b5" stroke="#666666" stroke-width="1"/><rect x="9.5" y="0.5" width="3" height="15" fill="#b5b5b5" stroke="#666666" stroke-width="1"/></svg>
<div class="t num" style="right:413px;top:389px">-14</div>
<svg style="left:613px;top:353px" width="183" height="50" viewBox="0 0 183 50"><polyline points="11.4,46.2 29.3,39.2 47.2,30.4 65.2,34.2 83.1,20.8 101.0,5.7 118.9,13.4 136.8,20.5 154.8,27.5 172.7,42.3" fill="none" stroke="#35a06e" stroke-width="1.2"/></svg>
<svg style="left:156px;top:436px" width="13" height="16" viewBox="0 0 13 16"><rect x="0.5" y="9.5" width="3" height="6" fill="#3f72b4" stroke="#2a5590" stroke-width="1"/><rect x="3.5" y="6.5" width="3" height="9" fill="#3f72b4" stroke="#2a5590" stroke-width="1"/><rect x="6.5" y="3.5" width="3" height="12" fill="#b5b5b5" stroke="#666666" stroke-width="1"/><rect x="9.5" y="0.5" width="3" height="15" fill="#b5b5b5" stroke="#666666" stroke-width="1"/></svg>
<div class="t num" style="right:826px;top:439px">-9</div>
<svg style="left:203px;top:436px" width="13" height="16" viewBox="0 0 13 16"><rect x="0.5" y="9.5" width="3" height="6" fill="#3f72b4" stroke="#2a5590" stroke-width="1"/><rect x="3.5" y="6.5" width="3" height="9" fill="#3f72b4" stroke="#2a5590" stroke-width="1"/><rect x="6.5" y="3.5" width="3" height="12" fill="#b5b5b5" stroke="#666666" stroke-width="1"/><rect x="9.5" y="0.5" width="3" height="15" fill="#b5b5b5" stroke="#666666" stroke-width="1"/></svg>
<div class="t num" style="right:781px;top:439px">16</div>
<svg style="left:248px;top:436px" width="13" height="16" viewBox="0 0 13 16"><rect x="0.5" y="9.5" width="3" height="6" fill="#3f72b4" stroke="#2a5590" stroke-width="1"/><rect x="3.5" y="6.5" width="3" height="9" fill="#3f72b4" stroke="#2a5590" stroke-width="1"/><rect x="6.5" y="3.5" width="3" height="12" fill="#3f72b4" stroke="#2a5590" stroke-width="1"/><rect x="9.5" y="0.5" width="3" height="15" fill="#b5b5b5" stroke="#666666" stroke-width="1"/></svg>
<div class="t num" style="right:736px;top:439px">24</div>
<svg style="left:293px;top:436px" width="13" height="16" viewBox="0 0 13 16"><rect x="0.5" y="9.5" width="3" height="6" fill="#3f72b4" stroke="#2a5590" stroke-width="1"/><rect x="3.5" y="6.5" width="3" height="9" fill="#3f72b4" stroke="#2a5590" stroke-width="1"/><rect x="6.5" y="3.5" width="3" height="12" fill="#b5b5b5" stroke="#666666" stroke-width="1"/><rect x="9.5" y="0.5" width="3" height="15" fill="#b5b5b5" stroke="#666666" stroke-width="1"/></svg>
<div class="t num" style="right:691px;top:439px">8</div>
<svg style="left:338px;top:436px" width="13" height="16" viewBox="0 0 13 16"><rect x="0.5" y="9.5" width="3" height="6" fill="#3f72b4" stroke="#2a5590" stroke-width="1"/><rect x="3.5" y="6.5" width="3" height="9" fill="#3f72b4" stroke="#2a5590" stroke-width="1"/><rect x="6.5" y="3.5" width="3" height="12" fill="#b5b5b5" stroke="#666666" stroke-width="1"/><rect x="9.5" y="0.5" width="3" height="15" fill="#b5b5b5" stroke="#666666" stroke-width="1"/></svg>
<div class="t num" style="right:646px;top:439px">19</div>
<svg style="left:383px;top:436px" width="13" height="16" viewBox="0 0 13 16"><rect x="0.5" y="9.5" width="3" height="6" fill="#3f72b4" stroke="#2a5590" stroke-width="1"/><rect x="3.5" y="6.5" width="3" height="9" fill="#3f72b4" stroke="#2a5590" stroke-width="1"/><rect x="6.5" y="3.5" width="3" height="12" fill="#b5b5b5" stroke="#666666" stroke-width="1"/><rect x="9.5" y="0.5" width="3" height="15" fill="#b5b5b5" stroke="#666666" stroke-width="1"/></svg>
<div class="t num" style="right:601px;top:439px">7</div>
<svg style="left:428px;top:436px" width="13" height="16" viewBox="0 0 13 16"><rect x="0.5" y="9.5" width="3" height="6" fill="#3f72b4" stroke="#2a5590" stroke-width="1"/><rect x="3.5" y="6.5" width="3" height="9" fill="#b5b5b5" stroke="#666666" stroke-width="1"/><rect x="6.5" y="3.5" width="3" height="12" fill="#b5b5b5" stroke="#666666" stroke-width="1"/><rect x="9.5" y="0.5" width="3" height="15" fill="#b5b5b5" stroke="#666666" stroke-width="1"/></svg>
<div class="t num" style="right:556px;top:439px">-57</div>
<svg style="left:473px;top:436px" width="13" height="16" viewBox="0 0 13 16"><rect x="0.5" y="9.5" width="3" height="6" fill="#3f72b4" stroke="#2a5590" stroke-width="1"/><rect x="3.5" y="6.5" width="3" height="9" fill="#3f72b4" stroke="#2a5590" stroke-width="1"/><rect x="6.5" y="3.5" width="3" height="12" fill="#3f72b4" stroke="#2a5590" stroke-width="1"/><rect x="9.5" y="0.5" width="3" height="15" fill="#b5b5b5" stroke="#666666" stroke-width="1"/></svg>
<div class="t num" style="right:503px;top:439px">32</div>
<svg style="left:526px;top:436px" width="13" height="16" viewBox="0 0 13 16"><rect x="0.5" y="9.5" width="3" height="6" fill="#3f72b4" stroke="#2a5590" stroke-width="1"/><rect x="3.5" y="6.5" width="3" height="9" fill="#b5b5b5" stroke="#666666" stroke-width="1"/><rect x="6.5" y="3.5" width="3" height="12" fill="#b5b5b5" stroke="#666666" stroke-width="1"/><rect x="9.5" y="0.5" width="3" height="15" fill="#b5b5b5" stroke="#666666" stroke-width="1"/></svg>
<div class="t num" style="right:458px;top:439px">-31</div>
<svg style="left:571px;top:436px" width="13" height="16" viewBox="0 0 13 16"><rect x="0.5" y="9.5" width="3" height="6" fill="#b5b5b5" stroke="#666666" stroke-width="1"/><rect x="3.5" y="6.5" width="3" height="9" fill="#b5b5b5" stroke="#666666" stroke-width="1"/><rect x="6.5" y="3.5" width="3" height="12" fill="#b5b5b5" stroke="#666666" stroke-width="1"/><rect x="9.5" y="0.5" width="3" height="15" fill="#b5b5b5" stroke="#666666" stroke-width="1"/></svg>
<div class="t num" style="right:413px;top:439px">-61</div>
<svg style="left:613px;top:403px" width="183" height="50" viewBox="0 0 183 50"><polyline points="11.4,23.6 29.3,12.7 47.2,9.2 65.2,16.2 83.1,11.4 101.0,16.6 118.9,44.5 136.8,5.7 154.8,33.1 172.7,46.2" fill="none" stroke="#35a06e" stroke-width="1.2"/></svg>
<svg style="left:156px;top:486px" width="13" height="16" viewBox="0 0 13 16"><rect x="0.5" y="9.5" width="3" height="6" fill="#3f72b4" stroke="#2a5590" stroke-width="1"/><rect x="3.5" y="6.5" width="3" height="9" fill="#3f72b4" stroke="#2a5590" stroke-width="1"/><rect x="6.5" y="3.5" width="3" height="12" fill="#3f72b4" stroke="#2a5590" stroke-width="1"/><rect x="9.5" y="0.5" width="3" height="15" fill="#3f72b4" stroke="#2a5590" stroke-width="1"/></svg>
<div class="t num" style="right:826px;top:489px">79</div>
<svg style="left:203px;top:486px" width="13" height="16" viewBox="0 0 13 16"><rect x="0.5" y="9.5" width="3" height="6" fill="#3f72b4" stroke="#2a5590" stroke-width="1"/><rect x="3.5" y="6.5" width="3" height="9" fill="#b5b5b5" stroke="#666666" stroke-width="1"/><rect x="6.5" y="3.5" width="3" height="12" fill="#b5b5b5" stroke="#666666" stroke-width="1"/><rect x="9.5" y="0.5" width="3" height="15" fill="#b5b5b5" stroke="#666666" stroke-width="1"/></svg>
<div class="t num" style="right:781px;top:489px">-22</div>
<svg style="left:248px;top:486px" width="13" height="16" viewBox="0 0 13 16"><rect x="0.5" y="9.5" width="3" height="6" fill="#3f72b4" stroke="#2a5590" stroke-width="1"/><rect x="3.5" y="6.5" width="3" height="9" fill="#3f72b4" stroke="#2a5590" stroke-width="1"/><rect x="6.5" y="3.5" width="3" height="12" fill="#b5b5b5" stroke="#666666" stroke-width="1"/><rect x="9.5" y="0.5" width="3" height="15" fill="#b5b5b5" stroke="#666666" stroke-width="1"/></svg>
<div class="t num" style="right:736px;top:489px">-17</div>
<svg style="left:293px;top:486px" width="13" height="16" viewBox="0 0 13 16"><rect x="0.5" y="9.5" width="3" height="6" fill="#b5b5b5" stroke="#666666" stroke-width="1"/><rect x="3.5" y="6.5" width="3" height="9" fill="#b5b5b5" stroke="#666666" stroke-width="1"/><rect x="6.5" y="3.5" width="3" height="12" fill="#b5b5b5" stroke="#666666" stroke-width="1"/><rect x="9.5" y="0.5" width="3" height="15" fill="#b5b5b5" stroke="#666666" stroke-width="1"/></svg>
<div class="t num" style="right:691px;top:489px">-80</div>
<svg style="left:338px;top:486px" width="13" height="16" viewBox="0 0 13 16"><rect x="0.5" y="9.5" width="3" height="6" fill="#b5b5b5" stroke="#666666" stroke-width="1"/><rect x="3.5" y="6.5" width="3" height="9" fill="#b5b5b5" stroke="#666666" stroke-width="1"/><rect x="6.5" y="3.5" width="3" height="12" fill="#b5b5b5" stroke="#666666" stroke-width="1"/><rect x="9.5" y="0.5" width="3" height="15" fill="#b5b5b5" stroke="#666666" stroke-width="1"/></svg>
<div class="t num" style="right:646px;top:489px">-82</div>
<svg style="left:383px;top:486px" width="13" height="16" viewBox="0 0 13 16"><rect x="0.5" y="9.5" width="3" height="6" fill="#b5b5b5" stroke="#666666" stroke-width="1"/><rect x="3.5" y="6.5" width="3" height="9" fill="#b5b5b5" stroke="#666666" stroke-width="1"/><rect x="6.5" y="3.5" width="3" height="12" fill="#b5b5b5" stroke="#666666" stroke-width="1"/><rect x="9.5" y="0.5" width="3" height="15" fill="#b5b5b5" stroke="#666666" stroke-width="1"/></svg>
<div class="t num" style="right:601px;top:489px">-76</div>
<svg style="left:428px;top:486px" width="13" height="16" viewBox="0 0 13 16"><rect x="0.5" y="9.5" width="3" height="6" fill="#3f72b4" stroke="#2a5590" stroke-width="1"/><rect x="3.5" y="6.5" width="3" height="9" fill="#3f72b4" stroke="#2a5590" stroke-width="1"/><rect x="6.5" y="3.5" width="3" height="12" fill="#3f72b4" stroke="#2a5590" stroke-width="1"/><rect x="9.5" y="0.5" width="3" height="15" fill="#b5b5b5" stroke="#666666" stroke-width="1"/></svg>
<div class="t num" style="right:556px;top:489px">53</div>
<svg style="left:473px;top:486px" width="13" height="16" viewBox="0 0 13 16"><rect x="0.5" y="9.5" width="3" height="6" fill="#3f72b4" stroke="#2a5590" stroke-width="1"/><rect x="3.5" y="6.5" width="3" height="9" fill="#3f72b4" stroke="#2a5590" stroke-width="1"/><rect x="6.5" y="3.5" width="3" height="12" fill="#b5b5b5" stroke="#666666" stroke-width="1"/><rect x="9.5" y="0.5" width="3" height="15" fill="#b5b5b5" stroke="#666666" stroke-width="1"/></svg>
<div class="t num" style="right:503px;top:489px">-5</div>
<svg style="left:526px;top:486px" width="13" height="16" viewBox="0 0 13 16"><rect x="0.5" y="9.5" width="3" height="6" fill="#b5b5b5" stroke="#666666" stroke-width="1"/><rect x="3.5" y="6.5" width="3" height="9" fill="#b5b5b5" stroke="#666666" stroke-width="1"/><rect x="6.5" y="3.5" width="3" height="12" fill="#b5b5b5" stroke="#666666" stroke-width="1"/><rect x="9.5" y="0.5" width="3" height="15" fill="#b5b5b5" stroke="#666666" stroke-width="1"/></svg>
<div class="t num" style="right:458px;top:489px">-66</div>
<svg style="left:571px;top:486px" width="13" height="16" viewBox="0 0 13 16"><rect x="0.5" y="9.5" width="3" height="6" fill="#3f72b4" stroke="#2a5590" stroke-width="1"/><rect x="3.5" y="6.5" width="3" height="9" fill="#3f72b4" stroke="#2a5590" stroke-width="1"/><rect x="6.5" y="3.5" width="3" height="12" fill="#3f72b4" stroke="#2a5590" stroke-width="1"/><rect x="9.5" y="0.5" width="3" height="15" fill="#3f72b4" stroke="#2a5590" stroke-width="1"/></svg>
<div class="t num" style="right:413px;top:489px">78</div>
<svg style="left:613px;top:453px" width="183" height="50" viewBox="0 0 183 50"><polyline points="11.4,5.7 29.3,31.1 47.2,29.8 65.2,45.7 83.1,46.2 101.0,44.7 118.9,12.2 136.8,26.8 154.8,42.2 172.7,6.0" fill="none" stroke="#35a06e" stroke-width="1.2"/></svg>
<svg style="left:156px;top:536px" width="13" height="16" viewBox="0 0 13 16"><rect x="0.5" y="9.5" width="3" height="6" fill="#b5b5b5" stroke="#666666" stroke-width="1"/><rect x="3.5" y="6.5" width="3" height="9" fill="#b5b5b5" stroke="#666666" stroke-width="1"/><rect x="6.5" y="3.5" width="3" height="12" fill="#b5b5b5" stroke="#666666" stroke-width="1"/><rect x="9.5" y="0.5" width="3" height="15" fill="#b5b5b5" stroke="#666666" stroke-width="1"/></svg>
<div class="t num" style="right:826px;top:539px">-83</div>
<svg style="left:203px;top:536px" width="13" height="16" viewBox="0 0 13 16"><rect x="0.5" y="9.5" width="3" height="6" fill="#3f72b4" stroke="#2a5590" stroke-width="1"/><rect x="3.5" y="6.5" width="3" height="9" fill="#3f72b4" stroke="#2a5590" stroke-width="1"/><rect x="6.5" y="3.5" width="3" height="12" fill="#3f72b4" stroke="#2a5590" stroke-width="1"/><rect x="9.5" y="0.5" width="3" height="15" fill="#3f72b4" stroke="#2a5590" stroke-width="1"/></svg>
<div class="t num" style="right:781px;top:539px">83</div>
<svg style="left:248px;top:536px" width="13" height="16" viewBox="0 0 13 16"><rect x="0.5" y="9.5" width="3" height="6" fill="#3f72b4" stroke="#2a5590" stroke-width="1"/><rect x="3.5" y="6.5" width="3" height="9" fill="#3f72b4" stroke="#2a5590" stroke-width="1"/><rect x="6.5" y="3.5" width="3" height="12" fill="#3f72b4" stroke="#2a5590" stroke-width="1"/><rect x="9.5" y="0.5" width="3" height="15" fill="#b5b5b5" stroke="#666666" stroke-width="1"/></svg>
<div class="t num" style="right:736px;top:539px">21</div>
<svg style="left:293px;top:536px" width="13" height="16" viewBox="0 0 13 16"><rect x="0.5" y="9.5" width="3" height="6" fill="#b5b5b5" stroke="#666666" stroke-width="1"/><rect x="3.5" y="6.5" width="3" height="9" fill="#b5b5b5" stroke="#666666" stroke-width="1"/><rect x="6.5" y="3.5" width="3" height="12" fill="#b5b5b5" stroke="#666666" stroke-width="1"/><rect x="9.5" y="0.5" width="3" height="15" fill="#b5b5b5" stroke="#666666" stroke-width="1"/></svg>
<div class="t num" style="right:691px;top:539px">-87</div>
<svg style="left:338px;top:536px" width="13" height="16" viewBox="0 0 13 16"><rect x="0.5" y="9.5" width="3" height="6" fill="#b5b5b5" stroke="#666666" stroke-width="1"/><rect x="3.5" y="6.5" width="3" height="9" fill="#b5b5b5" stroke="#666666" stroke-width="1"/><rect x="6.5" y="3.5" width="3" height="12" fill="#b5b5b5" stroke="#666666" stroke-width="1"/><rect x="9.5" y="0.5" width="3" height="15" fill="#b5b5b5" stroke="#666666" stroke-width="1"/></svg>
<div class="t num" style="right:646px;top:539px">-84</div>
<svg style="left:383px;top:536px" width="13" height="16" viewBox="0 0 13 16"><rect x="0.5" y="9.5" width="3" height="6" fill="#3f72b4" stroke="#2a5590" stroke-width="1"/><rect x="3.5" y="6.5" width="3" height="9" fill="#3f72b4" stroke="#2a5590" stroke-width="1"/><rect x="6.5" y="3.5" width="3" height="12" fill="#3f72b4" stroke="#2a5590" stroke-width="1"/><rect x="9.5" y="0.5" width="3" height="15" fill="#3f72b4" stroke="#2a5590" stroke-width="1"/></svg>
<div class="t num" style="right:601px;top:539px">92</div>
<svg style="left:428px;top:536px" width="13" height="16" viewBox="0 0 13 16"><rect x="0.5" y="9.5" width="3" height="6" fill="#b5b5b5" stroke="#666666" stroke-width="1"/><rect x="3.5" y="6.5" width="3" height="9" fill="#b5b5b5" stroke="#666666" stroke-width="1"/><rect x="6.5" y="3.5" width="3" height="12" fill="#b5b5b5" stroke="#666666" stroke-width="1"/><rect x="9.5" y="0.5" width="3" height="15" fill="#b5b5b5" stroke="#666666" stroke-width="1"/></svg>
<div class="t num" style="right:556px;top:539px">-85</div>
<svg style="left:473px;top:536px" width="13" height="16" viewBox="0 0 13 16"><rect x="0.5" y="9.5" width="3" height="6" fill="#b5b5b5" stroke="#666666" stroke-width="1"/><rect x="3.5" y="6.5" width="3" height="9" fill="#b5b5b5" stroke="#666666" stroke-width="1"/><rect x="6.5" y="3.5" width="3" height="12" fill="#b5b5b5" stroke="#666666" stroke-width="1"/><rect x="9.5" y="0.5" width="3" height="15" fill="#b5b5b5" stroke="#666666" stroke-width="1"/></svg>
<div class="t num" style="right:503px;top:539px">-90</div>
<svg style="left:526px;top:536px" width="13" height="16" viewBox="0 0 13 16"><rect x="0.5" y="9.5" width="3" height="6" fill="#3f72b4" stroke="#2a5590" stroke-width="1"/><rect x="3.5" y="6.5" width="3" height="9" fill="#3f72b4" stroke="#2a5590" stroke-width="1"/><rect x="6.5" y="3.5" width="3" height="12" fill="#b5b5b5" stroke="#666666" stroke-width="1"/><rect x="9.5" y="0.5" width="3" height="15" fill="#b5b5b5" stroke="#666666" stroke-width="1"/></svg>
<div class="t num" style="right:458px;top:539px">-2</div>
<svg style="left:571px;top:536px" width="13" height="16" viewBox="0 0 13 16"><rect x="0.5" y="9.5" width="3" height="6" fill="#3f72b4" stroke="#2a5590" stroke-width="1"/><rect x="3.5" y="6.5" width="3" height="9" fill="#3f72b4" stroke="#2a5590" stroke-width="1"/><rect x="6.5" y="3.5" width="3" height="12" fill="#3f72b4" stroke="#2a5590" stroke-width="1"/><rect x="9.5" y="0.5" width="3" height="15" fill="#3f72b4" stroke="#2a5590" stroke-width="1"/></svg>
<div class="t num" style="right:413px;top:539px">91</div>
<svg style="left:613px;top:503px" width="183" height="50" viewBox="0 0 183 50"><polyline points="11.4,44.6 29.3,7.7 47.2,21.5 65.2,45.5 83.1,44.9 101.0,5.7 118.9,45.1 136.8,46.2 154.8,26.6 172.7,5.9" fill="none" stroke="#35a06e" stroke-width="1.2"/></svg>
<svg style="left:156px;top:586px" width="13" height="16" viewBox="0 0 13 16"><rect x="0.5" y="9.5" width="3" height="6" fill="#b5b5b5" stroke="#666666" stroke-width="1"/><rect x="3.5" y="6.5" width="3" height="9" fill="#b5b5b5" stroke="#666666" stroke-width="1"/><rect x="6.5" y="3.5" width="3" height="12" fill="#b5b5b5" stroke="#666666" stroke-width="1"/><rect x="9.5" y="0.5" width="3" height="15" fill="#b5b5b5" stroke="#666666" stroke-width="1"/></svg>
<div class="t num" style="right:826px;top:589px">-94</div>
<svg style="left:203px;top:586px" width="13" height="16" viewBox="0 0 13 16"><rect x="0.5" y="9.5" width="3" height="6" fill="#3f72b4" stroke="#2a5590" stroke-width="1"/><rect x="3.5" y="6.5" width="3" height="9" fill="#3f72b4" stroke="#2a5590" stroke-width="1"/><rect x="6.5" y="3.5" width="3" height="12" fill="#b5b5b5" stroke="#666666" stroke-width="1"/><rect x="9.5" y="0.5" width="3" height="15" fill="#b5b5b5" stroke="#666666" stroke-width="1"/></svg>
<div class="t num" style="right:781px;top:589px">0</div>
<svg style="left:248px;top:586px" width="13" height="16" viewBox="0 0 13 16"><rect x="0.5" y="9.5" width="3" height="6" fill="#3f72b4" stroke="#2a5590" stroke-width="1"/><rect x="3.5" y="6.5" width="3" height="9" fill="#3f72b4" stroke="#2a5590" stroke-width="1"/><rect x="6.5" y="3.5" width="3" height="12" fill="#3f72b4" stroke="#2a5590" stroke-width="1"/><rect x="9.5" y="0.5" width="3" height="15" fill="#b5b5b5" stroke="#666666" stroke-width="1"/></svg>
<div class="t num" style="right:736px;top:589px">44</div>
<svg style="left:293px;top:586px" width="13" height="16" viewBox="0 0 13 16"><rect x="0.5" y="9.5" width="3" height="6" fill="#3f72b4" stroke="#2a5590" stroke-width="1"/><rect x="3.5" y="6.5" width="3" height="9" fill="#b5b5b5" stroke="#666666" stroke-width="1"/><rect x="6.5" y="3.5" width="3" height="12" fill="#b5b5b5" stroke="#666666" stroke-width="1"/><rect x="9.5" y="0.5" width="3" height="15" fill="#b5b5b5" stroke="#666666" stroke-width="1"/></svg>
<div class="t num" style="right:691px;top:589px">-58</div>
<svg style="left:338px;top:586px" width="13" height="16" viewBox="0 0 13 16"><rect x="0.5" y="9.5" width="3" height="6" fill="#b5b5b5" stroke="#666666" stroke-width="1"/><rect x="3.5" y="6.5" width="3" height="9" fill="#b5b5b5" stroke="#666666" stroke-width="1"/><rect x="6.5" y="3.5" width="3" height="12" fill="#b5b5b5" stroke="#666666" stroke-width="1"/><rect x="9.5" y="0.5" width="3" height="15" fill="#b5b5b5" stroke="#666666" stroke-width="1"/></svg>
<div class="t num" style="right:646px;top:589px">-63</div>
<svg style="left:383px;top:586px" width="13" height="16" viewBox="0 0 13 16"><rect x="0.5" y="9.5" width="3" height="6" fill="#3f72b4" stroke="#2a5590" stroke-width="1"/><rect x="3.5" y="6.5" width="3" height="9" fill="#b5b5b5" stroke="#666666" stroke-width="1"/><rect x="6.5" y="3.5" width="3" height="12" fill="#b5b5b5" stroke="#666666" stroke-width="1"/><rect x="9.5" y="0.5" width="3" height="15" fill="#b5b5b5" stroke="#666666" stroke-width="1"/></svg>
<div class="t num" style="right:601px;top:589px">-28</div>
<svg style="left:428px;top:586px" width="13" height="16" viewBox="0 0 13 16"><rect x="0.5" y="9.5" width="3" height="6" fill="#b5b5b5" stroke="#666666" stroke-width="1"/><rect x="3.5" y="6.5" width="3" height="9" fill="#b5b5b5" stroke="#666666" stroke-width="1"/><rect x="6.5" y="3.5" width="3" height="12" fill="#b5b5b5" stroke="#666666" stroke-width="1"/><rect x="9.5" y="0.5" width="3" height="15" fill="#b5b5b5" stroke="#666666" stroke-width="1"/></svg>
<div class="t num" style="right:556px;top:589px">-79</div>
<svg style="left:473px;top:586px" width="13" height="16" viewBox="0 0 13 16"><rect x="0.5" y="9.5" width="3" height="6" fill="#3f72b4" stroke="#2a5590" stroke-width="1"/><rect x="3.5" y="6.5" width="3" height="9" fill="#b5b5b5" stroke="#666666" stroke-width="1"/><rect x="6.5" y="3.5" width="3" height="12" fill="#b5b5b5" stroke="#666666" stroke-width="1"/><rect x="9.5" y="0.5" width="3" height="15" fill="#b5b5b5" stroke="#666666" stroke-width="1"/></svg>
<div class="t num" style="right:503px;top:589px">-30</div>
<svg style="left:526px;top:586px" width="13" height="16" viewBox="0 0 13 16"><rect x="0.5" y="9.5" width="3" height="6" fill="#3f72b4" stroke="#2a5590" stroke-width="1"/><rect x="3.5" y="6.5" width="3" height="9" fill="#3f72b4" stroke="#2a5590" stroke-width="1"/><rect x="6.5" y="3.5" width="3" height="12" fill="#3f72b4" stroke="#2a5590" stroke-width="1"/><rect x="9.5" y="0.5" width="3" height="15" fill="#b5b5b5" stroke="#666666" stroke-width="1"/></svg>
<div class="t num" style="right:458px;top:589px">38</div>
<svg style="left:571px;top:586px" width="13" height="16" viewBox="0 0 13 16"><rect x="0.5" y="9.5" width="3" height="6" fill="#3f72b4" stroke="#2a5590" stroke-width="1"/><rect x="3.5" y="6.5" width="3" height="9" fill="#3f72b4" stroke="#2a5590" stroke-width="1"/><rect x="6.5" y="3.5" width="3" height="12" fill="#3f72b4" stroke="#2a5590" stroke-width="1"/><rect x="9.5" y="0.5" width="3" height="15" fill="#3f72b4" stroke="#2a5590" stroke-width="1"/></svg>
<div class="t num" style="right:413px;top:589px">65</div>
<svg style="left:613px;top:553px" width="183" height="50" viewBox="0 0 183 50"><polyline points="11.4,46.2 29.3,22.3 47.2,11.0 65.2,37.0 83.1,38.3 101.0,29.4 118.9,42.4 136.8,29.9 154.8,12.6 172.7,5.7" fill="none" stroke="#35a06e" stroke-width="1.2"/></svg>
<svg style="left:156px;top:636px" width="13" height="16" viewBox="0 0 13 16"><rect x="0.5" y="9.5" width="3" height="6" fill="#b5b5b5" stroke="#666666" stroke-width="1"/><rect x="3.5" y="6.5" width="3" height="9" fill="#b5b5b5" stroke="#666666" stroke-width="1"/><rect x="6.5" y="3.5" width="3" height="12" fill="#b5b5b5" stroke="#666666" stroke-width="1"/><rect x="9.5" y="0.5" width="3" height="15" fill="#b5b5b5" stroke="#666666" stroke-width="1"/></svg>
<div class="t num" style="right:826px;top:639px">-95</div>
<svg style="left:203px;top:636px" width="13" height="16" viewBox="0 0 13 16"><rect x="0.5" y="9.5" width="3" height="6" fill="#b5b5b5" stroke="#666666" stroke-width="1"/><rect x="3.5" y="6.5" width="3" height="9" fill="#b5b5b5" stroke="#666666" stroke-width="1"/><rect x="6.5" y="3.5" width="3" height="12" fill="#b5b5b5" stroke="#666666" stroke-width="1"/><rect x="9.5" y="0.5" width="3" height="15" fill="#b5b5b5" stroke="#666666" stroke-width="1"/></svg>
<div class="t num" style="right:781px;top:639px">-85</div>
<svg style="left:248px;top:636px" width="13" height="16" viewBox="0 0 13 16"><rect x="0.5" y="9.5" width="3" height="6" fill="#3f72b4" stroke="#2a5590" stroke-width="1"/><rect x="3.5" y="6.5" width="3" height="9" fill="#3f72b4" stroke="#2a5590" stroke-width="1"/><rect x="6.5" y="3.5" width="3" height="12" fill="#3f72b4" stroke="#2a5590" stroke-width="1"/><rect x="9.5" y="0.5" width="3" height="15" fill="#3f72b4" stroke="#2a5590" stroke-width="1"/></svg>
<div class="t num" style="right:736px;top:639px">68</div>
<svg style="left:293px;top:636px" width="13" height="16" viewBox="0 0 13 16"><rect x="0.5" y="9.5" width="3" height="6" fill="#3f72b4" stroke="#2a5590" stroke-width="1"/><rect x="3.5" y="6.5" width="3" height="9" fill="#3f72b4" stroke="#2a5590" stroke-width="1"/><rect x="6.5" y="3.5" width="3" height="12" fill="#3f72b4" stroke="#2a5590" stroke-width="1"/><rect x="9.5" y="0.5" width="3" height="15" fill="#b5b5b5" stroke="#666666" stroke-width="1"/></svg>
<div class="t num" style="right:691px;top:639px">31</div>
<svg style="left:338px;top:636px" width="13" height="16" viewBox="0 0 13 16"><rect x="0.5" y="9.5" width="3" height="6" fill="#3f72b4" stroke="#2a5590" stroke-width="1"/><rect x="3.5" y="6.5" width="3" height="9" fill="#3f72b4" stroke="#2a5590" stroke-width="1"/><rect x="6.5" y="3.5" width="3" height="12" fill="#3f72b4" stroke="#2a5590" stroke-width="1"/><rect x="9.5" y="0.5" width="3" height="15" fill="#3f72b4" stroke="#2a5590" stroke-width="1"/></svg>
<div class="t num" style="right:646px;top:639px">83</div>
<svg style="left:383px;top:636px" width="13" height="16" viewBox="0 0 13 16"><rect x="0.5" y="9.5" width="3" height="6" fill="#3f72b4" stroke="#2a5590" stroke-width="1"/><rect x="3.5" y="6.5" width="3" height="9" fill="#3f72b4" stroke="#2a5590" stroke-width="1"/><rect x="6.5" y="3.5" width="3" height="12" fill="#3f72b4" stroke="#2a5590" stroke-width="1"/><rect x="9.5" y="0.5" width="3" height="15" fill="#b5b5b5" stroke="#666666" stroke-width="1"/></svg>
<div class="t num" style="right:601px;top:639px">30</div>
<svg style="left:428px;top:636px" width="13" height="16" viewBox="0 0 13 16"><rect x="0.5" y="9.5" width="3" height="6" fill="#3f72b4" stroke="#2a5590" stroke-width="1"/><rect x="3.5" y="6.5" width="3" height="9" fill="#3f72b4" stroke="#2a5590" stroke-width="1"/><rect x="6.5" y="3.5" width="3" height="12" fill="#3f72b4" stroke="#2a5590" stroke-width="1"/><rect x="9.5" y="0.5" width="3" height="15" fill="#3f72b4" stroke="#2a5590" stroke-width="1"/></svg>
<div class="t num" style="right:556px;top:639px">89</div>
<svg style="left:473px;top:636px" width="13" height="16" viewBox="0 0 13 16"><rect x="0.5" y="9.5" width="3" height="6" fill="#3f72b4" stroke="#2a5590" stroke-width="1"/><rect x="3.5" y="6.5" width="3" height="9" fill="#3f72b4" stroke="#2a5590" stroke-width="1"/><rect x="6.5" y="3.5" width="3" height="12" fill="#3f72b4" stroke="#2a5590" stroke-width="1"/><rect x="9.5" y="0.5" width="3" height="15" fill="#b5b5b5" stroke="#666666" stroke-width="1"/></svg>
<div class="t num" style="right:503px;top:639px">43</div>
<svg style="left:526px;top:636px" width="13" height="16" viewBox="0 0 13 16"><rect x="0.5" y="9.5" width="3" height="6" fill="#b5b5b5" stroke="#666666" stroke-width="1"/><rect x="3.5" y="6.5" width="3" height="9" fill="#b5b5b5" stroke="#666666" stroke-width="1"/><rect x="6.5" y="3.5" width="3" height="12" fill="#b5b5b5" stroke="#666666" stroke-width="1"/><rect x="9.5" y="0.5" width="3" height="15" fill="#b5b5b5" stroke="#666666" stroke-width="1"/></svg>
<div class="t num" style="right:458px;top:639px">-92</div>
<svg style="left:571px;top:636px" width="13" height="16" viewBox="0 0 13 16"><rect x="0.5" y="9.5" width="3" height="6" fill="#b5b5b5" stroke="#666666" stroke-width="1"/><rect x="3.5" y="6.5" width="3" height="9" fill="#b5b5b5" stroke="#666666" stroke-width="1"/><rect x="6.5" y="3.5" width="3" height="12" fill="#b5b5b5" stroke="#666666" stroke-width="1"/><rect x="9.5" y="0.5" width="3" height="15" fill="#b5b5b5" stroke="#666666" stroke-width="1"/></svg>
<div class="t num" style="right:413px;top:639px">-99</div>
<svg style="left:613px;top:603px" width="183" height="50" viewBox="0 0 183 50"><polyline points="11.4,45.3 29.3,43.2 47.2,10.2 65.2,18.2 83.1,7.0 101.0,18.4 118.9,5.7 136.8,15.6 154.8,44.7 172.7,46.2" fill="none" stroke="#35a06e" stroke-width="1.2"/></svg>
<svg style="left:156px;top:686px" width="13" height="16" viewBox="0 0 13 16"><rect x="0.5" y="9.5" width="3" height="6" fill="#3f72b4" stroke="#2a5590" stroke-width="1"/><rect x="3.5" y="6.5" width="3" height="9" fill="#3f72b4" stroke="#2a5590" stroke-width="1"/><rect x="6.5" y="3.5" width="3" height="12" fill="#3f72b4" stroke="#2a5590" stroke-width="1"/><rect x="9.5" y="0.5" width="3" height="15" fill="#3f72b4" stroke="#2a5590" stroke-width="1"/></svg>
<div class="t num" style="right:826px;top:689px">96</div>
<svg style="left:203px;top:686px" width="13" height="16" viewBox="0 0 13 16"><rect x="0.5" y="9.5" width="3" height="6" fill="#b5b5b5" stroke="#666666" stroke-width="1"/><rect x="3.5" y="6.5" width="3" height="9" fill="#b5b5b5" stroke="#666666" stroke-width="1"/><rect x="6.5" y="3.5" width="3" height="12" fill="#b5b5b5" stroke="#666666" stroke-width="1"/><rect x="9.5" y="0.5" width="3" height="15" fill="#b5b5b5" stroke="#666666" stroke-width="1"/></svg>
<div class="t num" style="right:781px;top:689px">-93</div>
<svg style="left:248px;top:686px" width="13" height="16" viewBox="0 0 13 16"><rect x="0.5" y="9.5" width="3" height="6" fill="#3f72b4" stroke="#2a5590" stroke-width="1"/><rect x="3.5" y="6.5" width="3" height="9" fill="#3f72b4" stroke="#2a5590" stroke-width="1"/><rect x="6.5" y="3.5" width="3" height="12" fill="#3f72b4" stroke="#2a5590" stroke-width="1"/><rect x="9.5" y="0.5" width="3" height="15" fill="#3f72b4" stroke="#2a5590" stroke-width="1"/></svg>
<div class="t num" style="right:736px;top:689px">95</div>
<svg style="left:293px;top:686px" width="13" height="16" viewBox="0 0 13 16"><rect x="0.5" y="9.5" width="3" height="6" fill="#3f72b4" stroke="#2a5590" stroke-width="1"/><rect x="3.5" y="6.5" width="3" height="9" fill="#3f72b4" stroke="#2a5590" stroke-width="1"/><rect x="6.5" y="3.5" width="3" height="12" fill="#b5b5b5" stroke="#666666" stroke-width="1"/><rect x="9.5" y="0.5" width="3" height="15" fill="#b5b5b5" stroke="#666666" stroke-width="1"/></svg>
<div class="t num" style="right:691px;top:689px">19</div>
<svg style="left:338px;top:686px" width="13" height="16" viewBox="0 0 13 16"><rect x="0.5" y="9.5" width="3" height="6" fill="#3f72b4" stroke="#2a5590" stroke-width="1"/><rect x="3.5" y="6.5" width="3" height="9" fill="#3f72b4" stroke="#2a5590" stroke-width="1"/><rect x="6.5" y="3.5" width="3" height="12" fill="#b5b5b5" stroke="#666666" stroke-width="1"/><rect x="9.5" y="0.5" width="3" height="15" fill="#b5b5b5" stroke="#666666" stroke-width="1"/></svg>
<div class="t num" style="right:646px;top:689px">4</div>
<svg style="left:383px;top:686px" width="13" height="16" viewBox="0 0 13 16"><rect x="0.5" y="9.5" width="3" height="6" fill="#3f72b4" stroke="#2a5590" stroke-width="1"/><rect x="3.5" y="6.5" width="3" height="9" fill="#3f72b4" stroke="#2a5590" stroke-width="1"/><rect x="6.5" y="3.5" width="3" height="12" fill="#3f72b4" stroke="#2a5590" stroke-width="1"/><rect x="9.5" y="0.5" width="3" height="15" fill="#b5b5b5" stroke="#666666" stroke-width="1"/></svg>
<div class="t num" style="right:601px;top:689px">21</div>
<svg style="left:428px;top:686px" width="13" height="16" viewBox="0 0 13 16"><rect x="0.5" y="9.5" width="3" height="6" fill="#3f72b4" stroke="#2a5590" stroke-width="1"/><rect x="3.5" y="6.5" width="3" height="9" fill="#3f72b4" stroke="#2a5590" stroke-width="1"/><rect x="6.5" y="3.5" width="3" height="12" fill="#3f72b4" stroke="#2a5590" stroke-width="1"/><rect x="9.5" y="0.5" width="3" height="15" fill="#b5b5b5" stroke="#666666" stroke-width="1"/></svg>
<div class="t num" style="right:556px;top:689px">46</div>
<svg style="left:473px;top:686px" width="13" height="16" viewBox="0 0 13 16"><rect x="0.5" y="9.5" width="3" height="6" fill="#3f72b4" stroke="#2a5590" stroke-width="1"/><rect x="3.5" y="6.5" width="3" height="9" fill="#3f72b4" stroke="#2a5590" stroke-width="1"/><rect x="6.5" y="3.5" width="3" height="12" fill="#b5b5b5" stroke="#666666" stroke-width="1"/><rect x="9.5" y="0.5" width="3" height="15" fill="#b5b5b5" stroke="#666666" stroke-width="1"/></svg>
<div class="t num" style="right:503px;top:689px">-16</div>
<svg style="left:526px;top:686px" width="13" height="16" viewBox="0 0 13 16"><rect x="0.5" y="9.5" width="3" height="6" fill="#3f72b4" stroke="#2a5590" stroke-width="1"/><rect x="3.5" y="6.5" width="3" height="9" fill="#3f72b4" stroke="#2a5590" stroke-width="1"/><rect x="6.5" y="3.5" width="3" height="12" fill="#3f72b4" stroke="#2a5590" stroke-width="1"/><rect x="9.5" y="0.5" width="3" height="15" fill="#3f72b4" stroke="#2a5590" stroke-width="1"/></svg>
<div class="t num" style="right:458px;top:689px">64</div>
<svg style="left:571px;top:686px" width="13" height="16" viewBox="0 0 13 16"><rect x="0.5" y="9.5" width="3" height="6" fill="#3f72b4" stroke="#2a5590" stroke-width="1"/><rect x="3.5" y="6.5" width="3" height="9" fill="#3f72b4" stroke="#2a5590" stroke-width="1"/><rect x="6.5" y="3.5" width="3" height="12" fill="#b5b5b5" stroke="#666666" stroke-width="1"/><rect x="9.5" y="0.5" width="3" height="15" fill="#b5b5b5" stroke="#666666" stroke-width="1"/></svg>
<div class="t num" style="right:413px;top:689px">3</div>
<svg style="left:613px;top:653px" width="183" height="50" viewBox="0 0 183 50"><polyline points="11.4,5.7 29.3,46.2 47.2,5.9 65.2,22.2 83.1,25.4 101.0,21.8 118.9,16.4 136.8,29.7 154.8,12.6 172.7,25.6" fill="none" stroke="#35a06e" stroke-width="1.2"/></svg><!-- MAIN END -->
<!-- BOT START --><div class="a" style="left:11px;top:283px;width:21px;height:70px;background:#f0f0f0"></div>
<div class="a" style="left:11px;top:553px;width:21px;height:50px;background:linear-gradient(90deg,#8fd1ac 0%,#b9e0c8 45%,rgba(230,230,230,0) 100%)"></div>
<div class="a" style="left:11px;top:283px;width:1px;height:434px;background:#9a9a9a"></div>
<div class="a" style="left:11px;top:288px;width:3px;height:1px;background:#c4c4c4"></div>
<div class="a" style="left:11px;top:298px;width:8px;height:1px;background:#9a9a9a"></div>
<div class="a" style="left:11px;top:307px;width:3px;height:1px;background:#c4c4c4"></div>
<div class="a" style="left:11px;top:317px;width:20px;height:1px;background:#9a9a9a"></div>
<div class="t" style="left:12px;top:317px;width:10px;height:9px;font-size:9.5px;color:#444;transform:rotate(90deg);transform-origin:5px 4.5px;text-align:center">1</div>
<div class="a" style="left:11px;top:327px;width:3px;height:1px;background:#c4c4c4"></div>
<div class="a" style="left:11px;top:336px;width:8px;height:1px;background:#9a9a9a"></div>
<div class="a" style="left:11px;top:346px;width:3px;height:1px;background:#c4c4c4"></div>
<div class="a" style="left:11px;top:365px;width:3px;height:1px;background:#c4c4c4"></div>
<div class="a" style="left:11px;top:375px;width:8px;height:1px;background:#9a9a9a"></div>
<div class="a" style="left:11px;top:384px;width:3px;height:1px;background:#c4c4c4"></div>
<div class="a" style="left:11px;top:394px;width:20px;height:1px;background:#9a9a9a"></div>
<div class="t" style="left:12px;top:394px;width:10px;height:9px;font-size:9.5px;color:#444;transform:rotate(90deg);transform-origin:5px 4.5px;text-align:center">1</div>
<div class="a" style="left:11px;top:404px;width:3px;height:1px;background:#c4c4c4"></div>
<div class="a" style="left:11px;top:413px;width:8px;height:1px;background:#9a9a9a"></div>
<div class="a" style="left:11px;top:423px;width:3px;height:1px;background:#c4c4c4"></div>
<div class="a" style="left:11px;top:433px;width:20px;height:1px;background:#9a9a9a"></div>
<div class="t" style="left:12px;top:433px;width:10px;height:9px;font-size:9.5px;color:#444;transform:rotate(90deg);transform-origin:5px 4.5px;text-align:center">2</div>
<div class="a" style="left:11px;top:442px;width:3px;height:1px;background:#c4c4c4"></div>
<div class="a" style="left:11px;top:452px;width:8px;height:1px;background:#9a9a9a"></div>
<div class="a" style="left:11px;top:462px;width:3px;height:1px;background:#c4c4c4"></div>
<div class="a" style="left:11px;top:471px;width:20px;height:1px;background:#9a9a9a"></div>
<div class="t" style="left:12px;top:471px;width:10px;height:9px;font-size:9.5px;color:#444;transform:rotate(90deg);transform-origin:5px 4.5px;text-align:center">3</div>
<div class="a" style="left:11px;top:481px;width:3px;height:1px;background:#c4c4c4"></div>
<div class="a" style="left:11px;top:491px;width:8px;height:1px;background:#9a9a9a"></div>
<div class="a" style="left:11px;top:500px;width:3px;height:1px;background:#c4c4c4"></div>
<div class="a" style="left:11px;top:510px;width:20px;height:1px;background:#9a9a9a"></div>
<div class="t" style="left:12px;top:510px;width:10px;height:9px;font-size:9.5px;color:#444;transform:rotate(90deg);transform-origin:5px 4.5px;text-align:center">4</div>
<div class="a" style="left:11px;top:520px;width:3px;height:1px;background:#c4c4c4"></div>
<div class="a" style="left:11px;top:529px;width:8px;height:1px;background:#9a9a9a"></div>
<div class="a" style="left:11px;top:539px;width:3px;height:1px;background:#c4c4c4"></div>
<div class="a" style="left:11px;top:548px;width:20px;height:1px;background:#9a9a9a"></div>
<div class="t" style="left:12px;top:548px;width:10px;height:9px;font-size:9.5px;color:#444;transform:rotate(90deg);transform-origin:5px 4.5px;text-align:center">5</div>
<div class="a" style="left:11px;top:558px;width:3px;height:1px;background:#c4c4c4"></div>
<div class="a" style="left:11px;top:568px;width:8px;height:1px;background:#9a9a9a"></div>
<div class="a" style="left:11px;top:577px;width:3px;height:1px;background:#c4c4c4"></div>
<div class="a" style="left:11px;top:587px;width:20px;height:1px;background:#9a9a9a"></div>
<div class="t" style="left:12px;top:587px;width:10px;height:9px;font-size:9.5px;color:#444;transform:rotate(90deg);transform-origin:5px 4.5px;text-align:center">6</div>
<div class="a" style="left:11px;top:597px;width:3px;height:1px;background:#c4c4c4"></div>
<div class="a" style="left:11px;top:606px;width:8px;height:1px;background:#9a9a9a"></div>
<div class="a" style="left:11px;top:616px;width:3px;height:1px;background:#c4c4c4"></div>
<div class="a" style="left:11px;top:626px;width:20px;height:1px;background:#9a9a9a"></div>
<div class="t" style="left:12px;top:626px;width:10px;height:9px;font-size:9.5px;color:#444;transform:rotate(90deg);transform-origin:5px 4.5px;text-align:center">7</div>
<div class="a" style="left:11px;top:635px;width:3px;height:1px;background:#c4c4c4"></div>
<div class="a" style="left:11px;top:645px;width:8px;height:1px;background:#9a9a9a"></div>
<div class="a" style="left:11px;top:655px;width:3px;height:1px;background:#c4c4c4"></div>
<div class="a" style="left:11px;top:664px;width:20px;height:1px;background:#9a9a9a"></div>
<div class="t" style="left:12px;top:664px;width:10px;height:9px;font-size:9.5px;color:#444;transform:rotate(90deg);transform-origin:5px 4.5px;text-align:center">8</div>
<div class="a" style="left:11px;top:674px;width:3px;height:1px;background:#c4c4c4"></div>
<div class="a" style="left:11px;top:684px;width:8px;height:1px;background:#9a9a9a"></div>
<div class="a" style="left:11px;top:693px;width:3px;height:1px;background:#c4c4c4"></div>
<div class="a" style="left:11px;top:703px;width:20px;height:1px;background:#9a9a9a"></div>
<div class="t" style="left:12px;top:703px;width:10px;height:9px;font-size:9.5px;color:#444;transform:rotate(90deg);transform-origin:5px 4.5px;text-align:center">9</div>
<div class="a" style="left:11px;top:713px;width:3px;height:1px;background:#c4c4c4"></div>
<div class="a" style="left:891px;top:215px;width:67px;height:18px;background:#f0f0f0"></div>
<div class="a" style="left:891px;top:215px;width:110px;height:1px;background:#9a9a9a"></div>
<div class="a" style="left:892px;top:215px;width:1px;height:3px;background:#c4c4c4"></div>
<div class="a" style="left:902px;top:215px;width:1px;height:7px;background:#9a9a9a"></div>
<div class="a" style="left:920px;top:215px;width:1px;height:15px;background:#9a9a9a"></div>
<div class="a" style="left:930px;top:215px;width:1px;height:3px;background:#c4c4c4"></div>
<div class="a" style="left:940px;top:215px;width:1px;height:7px;background:#9a9a9a"></div>
<div class="a" style="left:949px;top:215px;width:1px;height:3px;background:#c4c4c4"></div>
<div class="a" style="left:968px;top:215px;width:1px;height:3px;background:#c4c4c4"></div>
<div class="a" style="left:978px;top:215px;width:1px;height:7px;background:#9a9a9a"></div>
<div class="a" style="left:987px;top:215px;width:1px;height:3px;background:#c4c4c4"></div>
<div class="a" style="left:996px;top:215px;width:1px;height:17px;background:#9a9a9a"></div>
<div class="t" style="left:914px;top:218px;font-size:9.5px;color:#666;font-weight:bold">1</div>
<div class="t" style="left:990px;top:218px;font-size:9.5px;color:#666;font-weight:bold">1</div>
<div class="a" style="left:40px;top:554px;width:25px;height:49px;background:#d2d2d2"></div>
<div class="a" style="left:64px;top:553px;width:2px;height:51px;background:#217346"></div>
<div class="t" style="left:44px;top:589px;width:18px;text-align:center;font-size:12px;color:#24382c">5</div>
<svg style="left:613px;top:703px;overflow:hidden" width="183" height="14" viewBox="0 0 183 14"><polyline points="11.4,30 29.4,22 47.2,10 65,25 83,30 100.8,17 118.8,5.2 136.6,32 154.6,28 172.7,26" fill="none" stroke="#35a06e" stroke-width="1.2"/></svg>
<div class="a" style="left:957px;top:353px;width:1px;height:364px;background:#d4d4d4"></div>
<div class="a" style="left:957px;top:353px;width:44px;height:1px;background:#d4d4d4"></div>
<div class="a" style="left:957px;top:403px;width:44px;height:1px;background:#d4d4d4"></div>
<div class="a" style="left:957px;top:453px;width:44px;height:1px;background:#d4d4d4"></div>
<div class="a" style="left:957px;top:503px;width:44px;height:1px;background:#d4d4d4"></div>
<div class="a" style="left:957px;top:553px;width:44px;height:1px;background:#d4d4d4"></div>
<div class="a" style="left:957px;top:603px;width:44px;height:1px;background:#d4d4d4"></div>
<div class="a" style="left:957px;top:653px;width:44px;height:1px;background:#d4d4d4"></div>
<div class="a" style="left:957px;top:703px;width:44px;height:1px;background:#d4d4d4"></div>
<div class="a" style="left:963px;top:391px;width:15px;height:9px;background:#9bbb59"></div>
<div class="a" style="left:984px;top:391px;width:15px;height:2px;background:#9bbb59"></div>
<div class="a" style="left:963px;top:422px;width:15px;height:5px;background:#9bbb59"></div>
<div class="a" style="left:984px;top:415px;width:15px;height:7px;background:#c0504d"></div>
<div class="a" style="left:963px;top:458px;width:15px;height:21px;background:#c0504d"></div>
<div class="a" style="left:984px;top:479px;width:15px;height:5px;background:#9bbb59"></div>
<div class="a" style="left:984px;top:510px;width:15px;height:19px;background:#c0504d"></div>
<div class="a" style="left:963px;top:529px;width:15px;height:19px;background:#9bbb59"></div>
<div class="a" style="left:963px;top:575px;width:15px;height:24px;background:#9bbb59"></div>
<div class="a" style="left:963px;top:628px;width:15px;height:20px;background:#9bbb59"></div>
<div class="a" style="left:984px;top:628px;width:15px;height:20px;background:#9bbb59"></div>
<div class="a" style="left:963px;top:658px;width:15px;height:20px;background:#c0504d"></div>
<div class="a" style="left:984px;top:679px;width:15px;height:21px;background:#9bbb59"></div>
<div class="a" style="left:1001px;top:207px;width:22px;height:510px;background:#e6e6e6"></div>
<div class="a" style="left:1005px;top:318px;width:15px;height:385px;background:#dadada"></div>
<div class="a" style="left:1005px;top:207px;width:15px;height:15px;background:#fff;border:1px solid #ababab"></div>
<div class="arr" style="left:1008px;top:212px;border-top:none;border-bottom:4px solid #666;border-left-width:4px;border-right-width:4px"></div>
<div class="a" style="left:1005px;top:221px;width:15px;height:97px;background:#fff;border:1px solid #ababab"></div>
<div class="a" style="left:1005px;top:703px;width:15px;height:15px;background:#fff;border:1px solid #ababab"></div>
<div class="arr" style="left:1008px;top:709px;border-top-width:4px;border-left-width:4px;border-right-width:4px;border-top-color:#666"></div>
<div class="a" style="left:1px;top:717px;width:1022px;height:29px;background:#e6e6e6;border-top:1px solid #c6c6c6"></div>
<svg style="left:27px;top:726px" width="5" height="9" viewBox="0 0 5 9"><path d="M4.5 0L0 4.5 4.5 9z" fill="#c0c0c0"/></svg>
<svg style="left:57px;top:726px" width="5" height="9" viewBox="0 0 5 9"><path d="M0 0l4.5 4.5L0 9z" fill="#c0c0c0"/></svg>
<div class="a" style="left:101px;top:717px;width:72px;height:26px;background:#fff;border-bottom:2px solid #217346;border-left:1px solid #c6c6c6;border-right:1px solid #c6c6c6"></div>
<div class="t" style="left:113px;top:724px;font-size:13px;font-weight:bold;color:#217346;letter-spacing:-0.3px">Foglio1</div>
<div class="t" style="left:184px;top:724px;font-size:13px;color:#444;letter-spacing:-0.3px">Foglio2</div>
<div class="a" style="left:241px;top:722px;width:1px;height:18px;background:#ababab"></div>
<div class="t" style="left:254px;top:724px;font-size:13px;color:#444;letter-spacing:-0.3px">Foglio3</div>
<div class="a" style="left:310px;top:722px;width:1px;height:18px;background:#ababab"></div>
<svg style="left:344px;top:724px" width="15" height="15" viewBox="0 0 15 15"><circle cx="7.5" cy="7.5" r="6.8" fill="none" stroke="#c0c0c0" stroke-width="1.2"/><path d="M7.5 3.5v8M3.5 7.5h8" stroke="#c0c0c0" stroke-width="1.5"/></svg>
<div class="a" style="left:613px;top:727px;width:2px;height:2px;background:#aaa"></div>
<div class="a" style="left:613px;top:731px;width:2px;height:2px;background:#aaa"></div>
<div class="a" style="left:613px;top:735px;width:2px;height:2px;background:#aaa"></div>
<div class="a" style="left:632px;top:725px;width:355px;height:14px;background:#d9d9d9"></div>
<div class="a" style="left:632px;top:724px;width:15px;height:15px;background:#fff;border:1px solid #ababab"></div>
<svg style="left:636px;top:727px" width="5" height="9" viewBox="0 0 5 9"><path d="M4.5 0.5L0.5 4.5 4.5 8.5z" fill="#666"/></svg>
<div class="a" style="left:646px;top:724px;width:139px;height:15px;background:#fff;border:1px solid #ababab"></div>
<div class="a" style="left:987px;top:724px;width:15px;height:15px;background:#fff;border:1px solid #ababab"></div>
<svg style="left:992px;top:727px" width="5" height="9" viewBox="0 0 5 9"><path d="M0.5 0.5l4 4-4 4z" fill="#666"/></svg>
<div class="a" style="left:1px;top:745px;width:1022px;height:22px;background:#f1f1f1;border-top:1px solid #cfcfcf"></div>
<div class="t" style="left:9px;top:750px;font-size:12px;color:#444;letter-spacing:-0.1px">Pronto</div>
<svg style="left:63px;top:748px" width="13" height="13" viewBox="0 0 13 13"><circle cx="3" cy="3" r="2.8" fill="#777"/><path d="M6 2.5h6.5v10H0.5V7" fill="none" stroke="#777" stroke-width="1"/><path d="M2 8.5h2M5 8.5h2M8 8.5h2M2 10.5h2M5 10.5h2M8 10.5h2M7 5.5h4" stroke="#777" stroke-width="1"/></svg>
<div class="t" style="left:97px;top:750px;font-size:12px;color:#444;letter-spacing:-0.2px">Pagina: 3 di 5</div>
<svg style="left:732px;top:748px" width="14" height="14" viewBox="0 0 14 14"><path d="M0.5 0.5h13v13h-13zM0.5 4.8h13M0.5 9.2h13M4.8 0.5v13M9.2 0.5v13" fill="none" stroke="#666" stroke-width="1"/></svg>
<div class="a" style="left:758px;top:746px;width:38px;height:20px;background:#cfcfcf"></div>
<svg style="left:770px;top:749px" width="15" height="13" viewBox="0 0 15 13"><path d="M0.5 0.5h13.5v12h-13.5z" fill="none" stroke="#666" stroke-width="1"/><path d="M3.5 2.5h7v8h-7z" fill="none" stroke="#666" stroke-width="1"/><path d="M5 4.5h4M5 6.5h4M5 8.5h4" stroke="#666" stroke-width="1"/></svg>
<svg style="left:808px;top:749px" width="15" height="13" viewBox="0 0 15 13"><path d="M0.5 0.5h13.5v12h-13.5z" fill="none" stroke="#666" stroke-width="1"/><path d="M0.5 7.5h8v-7M5 0.5v7" fill="none" stroke="#666" stroke-width="1"/></svg>
<div class="a" style="left:839px;top:755px;width:6px;height:1.5px;background:#555"></div>
<div class="a" style="left:850px;top:755px;width:100px;height:1px;background:#9a9a9a"></div>
<div class="a" style="left:897px;top:750px;width:4px;height:11px;background:#555"></div>
<svg style="left:953px;top:751px" width="9" height="9" viewBox="0 0 9 9"><path d="M4.5 0v9M0 4.5h9" stroke="#555" stroke-width="1.6"/></svg>
<div class="t" style="left:976px;top:750px;font-size:12px;color:#444;letter-spacing:-0.3px">100%</div><!-- BOT END -->
<!-- window borders -->
<div class="a" style="left:0;top:66px;width:1px;height:702px;background:#217346"></div>
<div class="a" style="left:1023px;top:66px;width:1px;height:702px;background:#217346"></div>
<div class="a" style="left:0;top:767px;width:1024px;height:1px;background:#217346"></div>
</body></html>
